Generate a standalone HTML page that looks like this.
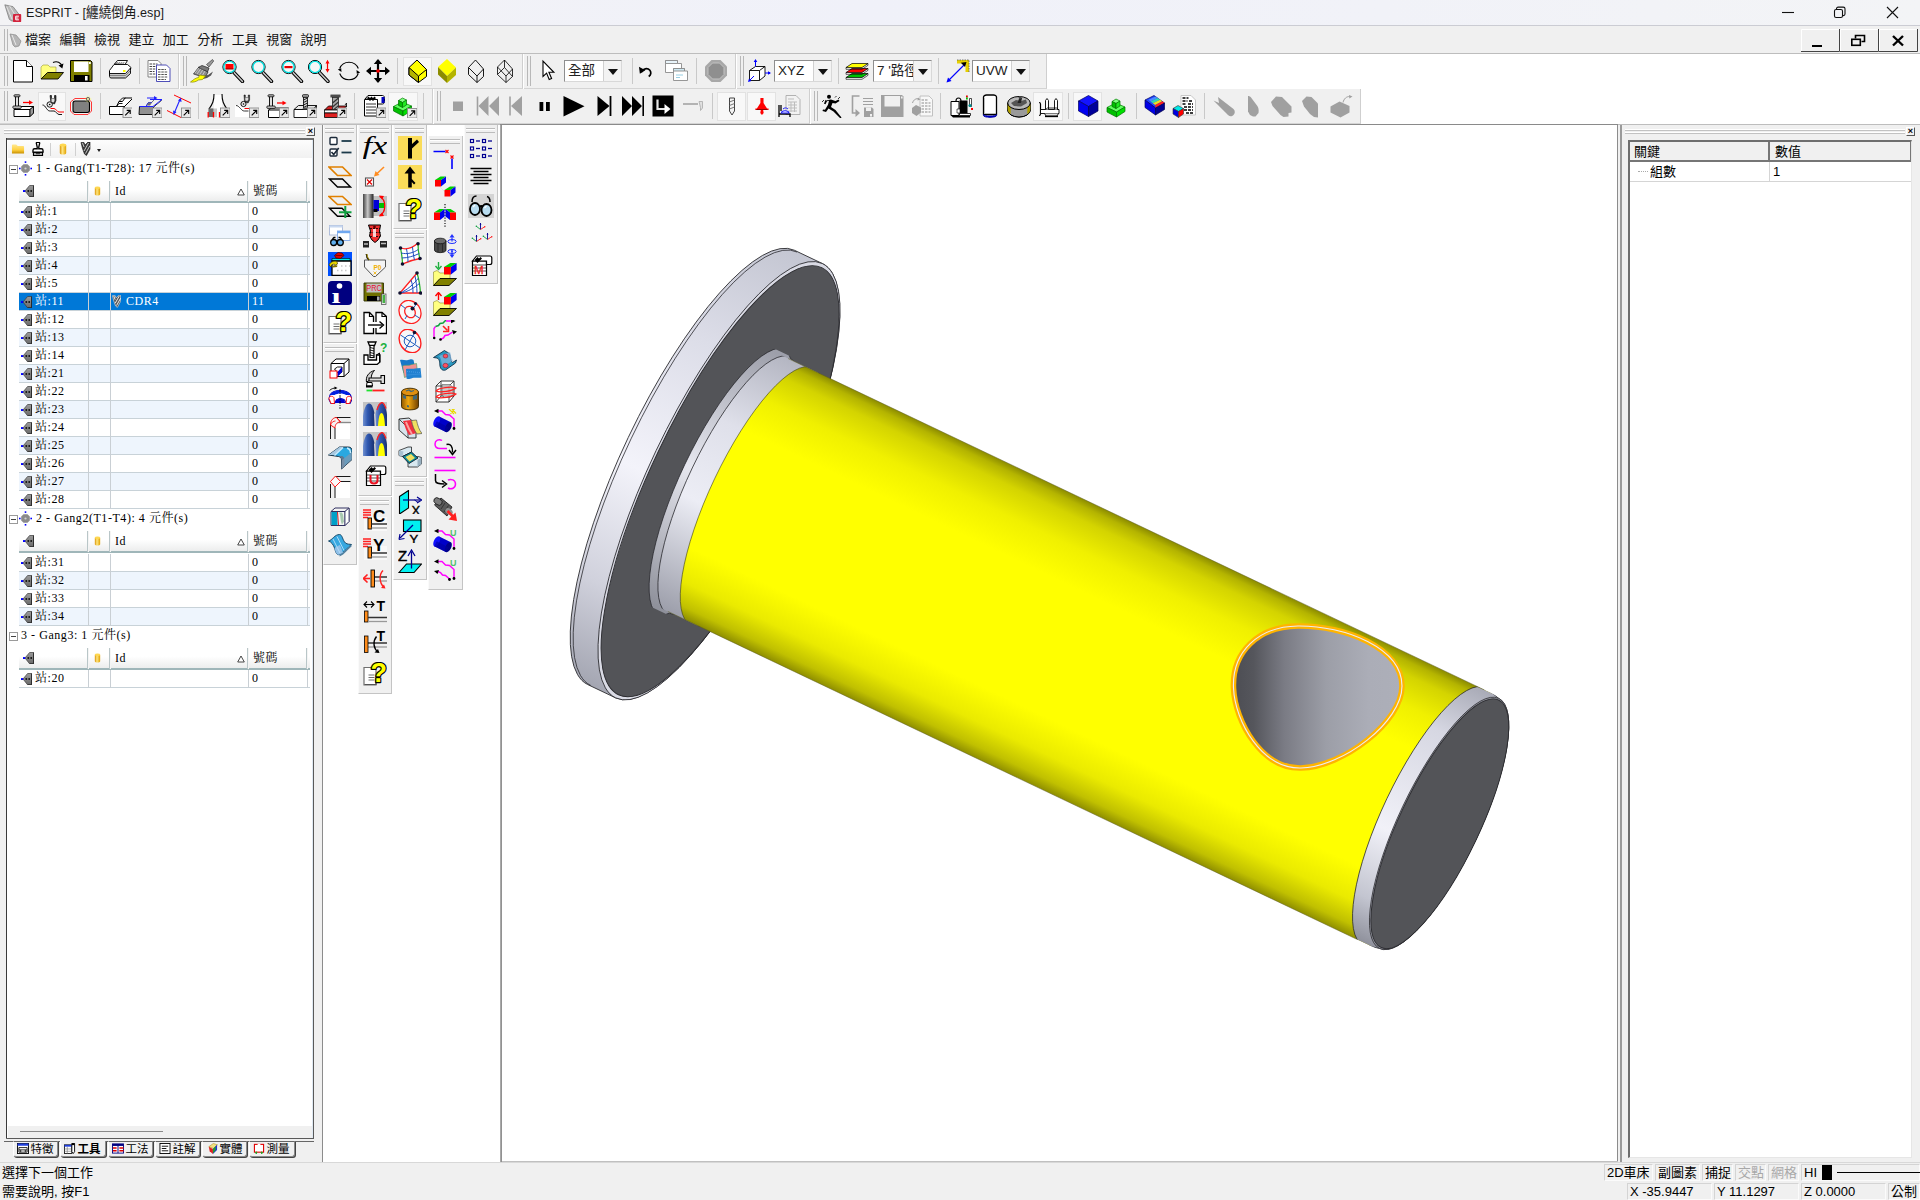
<!DOCTYPE html><html lang="zh-Hant"><head><meta charset="utf-8"><title>ESPRIT</title><style>
*{box-sizing:border-box;margin:0;padding:0}
html,body{width:1920px;height:1200px;overflow:hidden;background:#f0f0f0;font-family:"Liberation Sans","Noto Sans CJK TC",sans-serif;font-size:13px;color:#000}
.abs{position:absolute}
#title{position:absolute;left:0;top:0;width:1920px;height:25px;background:linear-gradient(90deg,#f3f3f5 0%,#f0f1f9 45%,#f1f2f8 72%,#f3f4f6 100%)}
#title .t{position:absolute;left:26px;top:5px;font-size:13.500px;line-height:16px;white-space:nowrap;transform-origin:0 50%;color:#1a1a1a}
#menubar{position:absolute;left:0;top:25px;width:1920px;height:29px;background:#f0f0f0;border-top:1px solid #cbccd3;border-bottom:1px solid #bdbdbd}
.mi{position:absolute;top:6px;font-size:13px;line-height:16px;white-space:nowrap;color:#111}
.tbrow{position:absolute;left:0;width:1920px;background:#fff}
.tb{position:absolute;top:0;height:100%;background:#f0f0f0;border-right:1px solid #cfcfcf;border-bottom:1px solid #d4d4d4}
.grip{position:absolute;top:2px;bottom:2px;width:4px;border-left:1px solid #b8b8b8;border-right:1px solid #b8b8b8}
.sep{position:absolute;top:4px;bottom:4px;width:1px;background:#c9c9c9}
.ic{position:absolute}
.pressed{position:absolute;background:#f8f8f8;border:1px solid #e2e2e2}
.combo{position:absolute;height:22px;background:#fff;border:1px solid #8e8e8e;border-right-color:#d8d8d8;border-bottom-color:#d8d8d8;font-size:13.500px;line-height:20px;padding-left:3px;color:#222;white-space:nowrap;overflow:hidden}
.combo i{position:absolute;right:0;top:0;width:18px;height:20px;background:#f3f3f3;border-left:1px solid #d0d0d0}
.combo i:after{content:"";position:absolute;left:4px;top:8px;border:5px solid transparent;border-top:6px solid #111;border-bottom:0}
#main{position:absolute;left:0;top:124px;width:1920px;height:1038px;background:#f0f0f0;border-top:1px solid #bdbdbd}
.hgrip{position:absolute;height:5px;background:linear-gradient(#fff 0,#fff 1px,#c2c2c2 1px,#c2c2c2 2px,#f0f0f0 2px,#f0f0f0 3px,#fff 3px,#fff 4px,#c2c2c2 4px,#c2c2c2 5px)}
.xbtn{position:absolute;width:9px;height:9px;background:#f0f0f0;border:1px solid #fff;border-right-color:#555;border-bottom-color:#555;font-size:9px;line-height:7px;font-weight:bold;text-align:center}
.vtb{position:absolute;background:#f0f0f0;border-right:1px solid #c4c4c4;border-bottom:1px solid #c4c4c4;border-left:1px solid #fafafa}
.vgrip{position:absolute;left:1px;right:2px;height:5px;border-top:1px solid #bcbcbc;border-bottom:1px solid #bcbcbc;background:linear-gradient(#fff,#fff 1px,#f0f0f0 1px,#f0f0f0 2px,#f0f0f0 3px)}
#status{position:absolute;left:0;top:1162px;width:1920px;height:38px;background:#f0f0f0;border-top:1px solid #d8d8d8}
.sb{position:absolute;font-size:13px;line-height:16px;white-space:nowrap;border:1px solid #d4d4d4;border-right-color:#fbfbfb;border-bottom-color:#fbfbfb;padding-left:2px;height:17px}
.tree{font-family:"Liberation Serif","Noto Serif CJK SC",serif;font-size:12px;letter-spacing:.55px}
.trow{position:absolute;left:19px;width:291px;height:18px;border-bottom:1px solid #c8d2d8;background:#fff}
.trow.alt{background:#eef5fd}
.trow.sel{background:#0078d7;color:#fff}
.trow span{position:absolute;top:0;line-height:17px;white-space:nowrap}
.trow b{position:absolute;top:0;width:1px;height:18px;background:#c9cfd4}
.thead{position:absolute;left:19px;width:291px;height:23px;background:linear-gradient(#fff,#fff 45%,#eceded 100%);border-bottom:2px solid #9fb6b9}
.thead span{position:absolute;top:2px;line-height:18px}
.thead b{position:absolute;top:1px;width:2px;height:21px;background:#b9c6c8;border-right:1px solid #f4f4f4}
.gtitle{position:absolute;left:0;width:304px;height:22px;line-height:20px;white-space:nowrap}
.tab{position:absolute;top:1141px;height:16px;background:#f0f0f0;border:1px solid #8a8a8a;border-top:0;border-left-color:#fff;border-radius:0 0 3px 3px;font-size:11.500px;line-height:15px;white-space:nowrap;box-shadow:1px 1px 0 #444}
</style></head><body>
<div id="title">
<svg class="ic" style="left:3px;top:3px" width="20" height="20" viewBox="0 0 22 22"><path d="M2 2l9 2 7 9-3 5-5 2-3-2z" fill="#b9b9b9" stroke="#777" stroke-width=".8"/><path d="M4 4l6 14M7 3l8 13" stroke="#e6e6e6" stroke-width="1"/><rect x="11" y="12" width="9" height="9" rx="1" fill="#d2233c"/><path d="M14 14.500h3.500M14 16.500h3M14 18.500h3.500M14 14.500v4" stroke="#fff" stroke-width="1.100" fill="none"/></svg>
<div class="t" style="transform:scaleX(.935)">ESPRIT - [纏繞倒角.esp]</div>
<svg class="abs" style="left:1770px;top:0" width="150" height="25" viewBox="0 0 150 25"><g stroke="#111" stroke-width="1.1" fill="none"><path d="M12 12.5h12"/><rect x="64.5" y="9.500" width="8" height="8" rx="1.6"/><path d="M66.500 9.200v-.5a1.600 1.600 0 0 1 1.600-1.600h5.200a1.700 1.700 0 0 1 1.700 1.700v5.200a1.600 1.600 0 0 1-1.600 1.600h-.5"/><path d="M117 7l11 11M128 7l-11 11"/></g></svg>
</div>
<div id="menubar">
<div class="grip" style="left:4px;top:3px;bottom:2px;width:4px"></div>
<svg class="ic" style="left:9px;top:6px" width="14" height="16" viewBox="0 0 14 16"><path d="M1 2l6 1 5 6-2 5-4 1-2-2z" fill="#b5b5b5" stroke="#8a8a8a" stroke-width=".7"/><path d="M3 3l4 10" stroke="#e8e8e8"/></svg>
<div class="mi" style="left:25.0px">檔案</div>
<div class="mi" style="left:59.5px">編輯</div>
<div class="mi" style="left:93.9px">檢視</div>
<div class="mi" style="left:128.4px">建立</div>
<div class="mi" style="left:162.8px">加工</div>
<div class="mi" style="left:197.2px">分析</div>
<div class="mi" style="left:231.7px">工具</div>
<div class="mi" style="left:266.2px">視窗</div>
<div class="mi" style="left:300.6px">說明</div>
<svg class="abs" style="left:1800px;top:3px" width="120" height="24" viewBox="0 0 120 24"><g fill="#f0f0f0"><rect x="1" y="0" width="38" height="22"/><rect x="40" y="0" width="38" height="22"/><rect x="79" y="0" width="38" height="22"/></g><g stroke="#fff" fill="none"><path d="M1.5 22V.5H39M40.5 22V.5H78M79.500 22V.5H117"/></g><g stroke="#444" fill="none"><path d="M1 22.500H39.500V0M40 22.500H78.500V0M79 22.500H117.500V0"/></g><g stroke="#000" fill="none"><path d="M12 17h10" stroke-width="2"/><path d="M55.500 9.500v-3h9v6h-3" stroke-width="1.6"/><rect x="51.800" y="10.300" width="8.500" height="6" stroke-width="1.600"/><path d="M93 7l10 9.500M103 7l-10 9.500" stroke-width="2.4"/></g></svg>
</div>
<div class="tbrow" style="top:54px;height:35px">
<div class="tb" style="left:0px;width:179px">
<div class="grip" style="left:4px"></div>
<svg class="ic" style="left:11px;top:5px" width="24" height="24" viewBox="0 0 24 24"><path d="M2.500 1.500h13l6 6v15.500h-19z" fill="#fff" stroke="#000" stroke-width="1"/><path d="M15.500 1.500v6h6" fill="#fff" stroke="#000" stroke-width="1"/></svg>
<svg class="ic" style="left:39.5px;top:5px" width="24" height="24" viewBox="0 0 24 24"><path d="M1 8l2-2h5l2 2h6v6h-9l-6 6z" fill="#ffff80" stroke="#9a9a30" stroke-width=".6"/><path d="M1 20h17l5.500-6.500h-16z" fill="#808000" stroke="#000" stroke-width=".9"/><path d="M13 3.500c4-2 8 0 9 4" fill="none" stroke="#000" stroke-width="1.100"/><path d="M23.500 4.500l-1.200 5-3.800-3z" fill="#000"/></svg>
<svg class="ic" style="left:69px;top:5px" width="24" height="24" viewBox="0 0 24 24"><path d="M1.500 1.500h20l1.500 1.500v19.500h-21.500z" fill="#808000" stroke="#000" stroke-width="1"/><rect x="5" y="2.500" width="14.500" height="10.500" fill="#fff"/><rect x="20" y="3" width="1.800" height="2" fill="#fff"/><rect x="5" y="16" width="15.500" height="6.500" fill="#000"/><rect x="16" y="17" width="2.600" height="4.500" fill="#fff"/></svg>
<div class="sep" style="left:100px"></div>
<svg class="ic" style="left:107.5px;top:5px" width="24" height="24" viewBox="0 0 24 24"><path d="M6.500 5l3-3.500h10l-2.500 4z" fill="#fff" stroke="#000" stroke-width=".9"/><path d="M8.500 3.500h8M7.800 4.500h8" stroke="#555" stroke-width=".6" stroke-dasharray="1.500 .7"/><path d="M1.500 11.500l4.500-6h13.500l3.500 3-1 3.500-4 4.500h-16.500z" fill="#fff" stroke="#000" stroke-width=".9"/><path d="M1.500 12v5.500l1 1.500h15l5-4.500v-5.500l-5 5.500h-16z" fill="#c8c8c8" stroke="#000" stroke-width=".9"/><rect x="15" y="11" width="2.500" height="2" fill="#ffff00"/><path d="M2 16.500h15.500l5-5" fill="none" stroke="#666" stroke-width=".7"/></svg>
<div class="sep" style="left:139px"></div>
<svg class="ic" style="left:147px;top:5px" width="24" height="24" viewBox="0 0 24 24"><path d="M1 1.500h10l3 3v13.500h-13z" fill="#fff" stroke="#777" stroke-width=".9"/><path d="M2.500 5h8M2.500 7.500h6M2.500 10h7M2.500 12.500h5M2.500 15h6" stroke="#444" stroke-width="1.100" stroke-dasharray="2.500 .8"/><path d="M9.500 6h10l3.500 3.500v13h-13.500z" fill="#fff" stroke="#3a3ab0" stroke-width=".9"/><path d="M11 10.500h8M11 13h10M11 15.500h9M11 18h10M11 20.500h8" stroke="#555" stroke-width="1.100" stroke-dasharray="2.500 .8"/></svg>
</div>
<div class="tb" style="left:180px;width:343px">
<div class="grip" style="left:3px"></div>
<svg class="ic" style="left:9.5px;top:5px" width="24" height="24" viewBox="0 0 24 24"><path d="M16.500 5.500l6-5 1.200 1.500-4.700 6z" fill="#9a9a9a" stroke="#444" stroke-width=".7"/><path d="M8 8.500l4-2 7 2.500-1.500 4z" fill="#7a7a7a" stroke="#222" stroke-width=".7"/><path d="M3.500 15l5-6.500 9.500 4.500-2 4-3 1z" fill="#8c8c8c" stroke="#222" stroke-width=".7"/><path d="M5 14l4-5M7 15l4-5.500M9.500 16l3.500-5.500M12 17l3-5" stroke="#ddd" stroke-width=".7"/><path d="M13 17l5-1 5-3.500-2 4-4 2.500-4 1z" fill="#555"/><path d="M.5 23c4-3 5-4 8-4.500l1-2.500 6 1-3 3.500-4 .5c-2 1.500-5 2.500-8 2z" fill="#ffff00" stroke="#8a8a00" stroke-width=".7"/></svg>
<svg class="ic" style="left:41px;top:5px" width="24" height="24" viewBox="0 0 24 24"><path d="M13 13.500l8.500 9" stroke="#000" stroke-width="3.400" stroke-linecap="round"/><path d="M13 13.500l8.300 8.800" stroke="#c8c8c8" stroke-width="1.600" stroke-linecap="round"/><circle cx="8.500" cy="8" r="6.600" fill="#f6f6f6" stroke="#000" stroke-width="1"/><circle cx="8.500" cy="8" r="5.600" fill="none" stroke="#00e0e0" stroke-width="1.300"/><rect x="4.500" y="5" width="8" height="5" fill="#ff0000"/><path d="M4.500 10h8" stroke="#800" stroke-width="1"/></svg>
<svg class="ic" style="left:70px;top:5px" width="24" height="24" viewBox="0 0 24 24"><path d="M13 13.500l8.500 9" stroke="#000" stroke-width="3.400" stroke-linecap="round"/><path d="M13 13.500l8.300 8.800" stroke="#c8c8c8" stroke-width="1.600" stroke-linecap="round"/><circle cx="8.500" cy="8" r="6.600" fill="#f6f6f6" stroke="#000" stroke-width="1"/><circle cx="8.500" cy="8" r="5.600" fill="none" stroke="#00e0e0" stroke-width="1.300"/></svg>
<svg class="ic" style="left:99.5px;top:5px" width="24" height="24" viewBox="0 0 24 24"><path d="M13 13.500l8.500 9" stroke="#000" stroke-width="3.400" stroke-linecap="round"/><path d="M13 13.500l8.300 8.800" stroke="#c8c8c8" stroke-width="1.600" stroke-linecap="round"/><circle cx="8.500" cy="8" r="6.600" fill="#f6f6f6" stroke="#000" stroke-width="1"/><circle cx="8.500" cy="8" r="5.600" fill="none" stroke="#00e0e0" stroke-width="1.300"/><rect x="4.500" y="7" width="8" height="2.200" fill="#e00000"/></svg>
<svg class="ic" style="left:127.5px;top:5px" width="24" height="24" viewBox="0 0 24 24"><g transform="translate(-1.500 0)"><path d="M13 13.500l8.500 9" stroke="#000" stroke-width="3.400" stroke-linecap="round"/><path d="M13 13.500l8.300 8.800" stroke="#c8c8c8" stroke-width="1.600" stroke-linecap="round"/><circle cx="8.500" cy="8" r="6.600" fill="#f6f6f6" stroke="#000" stroke-width="1"/><circle cx="8.500" cy="8" r="5.600" fill="none" stroke="#00e0e0" stroke-width="1.300"/></g><path d="M19.500 3v8.500" stroke="#ff0000" stroke-width="1.200"/><path d="M19.500 .8l2 3.700h-4zM19.500 13.700l2-3.700h-4z" fill="#ff0000"/></svg>
<svg class="ic" style="left:157px;top:5px" width="24" height="24" viewBox="0 0 24 24"><path d="M2.700 9.500a10 10 0 0 1 18.600 0M21.300 14.500a10 10 0 0 1-18.600 0" fill="none" stroke="#000" stroke-width="1.100"/><path d="M.8 10.500l3.400-1.200.3 3.600zM23.200 13.500l-3.400 1.200-.3-3.600z" fill="#000" transform="translate(0 0)"/></svg>
<svg class="ic" style="left:185.5px;top:5px" width="24" height="24" viewBox="0 0 24 24"><path d="M12 1v22M1 12h22" stroke="#000" stroke-width="2.200"/><path d="M12 0l4.200 5h-8.400zM12 24l4.200-5h-8.400zM0 12l5-4.200v8.400zM24 12l-5-4.200v8.400z" fill="#000"/><circle cx="12" cy="12" r="1.800" fill="#ff0000"/></svg>
<div class="sep" style="left:217px"></div>
<div class="pressed" style="left:223px;top:3px;width:29px;height:29px"></div>
<svg class="ic" style="left:226px;top:5px" width="24" height="24" viewBox="0 0 24 24"><path d="M3 8.500l8-7.500 9.500 9.500v7l-8 6-9.500-7.500z" fill="#ffff00" stroke="#000" stroke-width="1"/><path d="M3 8.500l9.500 8.500v6.500l-9.500-7.500z" fill="#b4b400" stroke="#000" stroke-width="1"/><path d="M12.500 17l8-6.500" stroke="#000" stroke-width="1"/></svg>
<svg class="ic" style="left:255px;top:5px" width="24" height="24" viewBox="0 0 24 24"><path d="M3 8l9-8 9 8.500-9 8.500z" fill="#ffff00"/><path d="M3 8l9 9v7l-9-8.500z" fill="#8c8c00"/><path d="M12 17l9-8.500v7.500l-9 8z" fill="#b4b400"/></svg>
<svg class="ic" style="left:283.5px;top:5px" width="24" height="24" viewBox="0 0 24 24"><path d="M4.500 8.500l7-7.500 8 9v7.500l-6.500 6-8.500-8z" fill="none" stroke="#000" stroke-width=".9"/><path d="M4.500 8.500l8.500 8.500v6.500M13 17l6.500-7" fill="none" stroke="#000" stroke-width=".9"/></svg>
<svg class="ic" style="left:313px;top:5px" width="24" height="24" viewBox="0 0 24 24"><path d="M4.500 8l7-7 8 9v7.500l-6.500 6-8.500-8z" fill="none" stroke="#000" stroke-width=".8"/><path d="M4.500 8l8.500 9v6.500M13 17l6.500-7M11.500 1v7.500l-7 7M11.500 8.500l8 9" fill="none" stroke="#000" stroke-width=".8"/></svg>
</div>
<div class="tb" style="left:524px;width:212px">
<div class="grip" style="left:3px"></div>
<svg class="ic" style="left:12px;top:5px" width="24" height="24" viewBox="0 0 24 24"><path d="M7 2v15.500l3.600-3.400 2.600 6.400 2.400-1-2.700-6.200h5z" fill="#fff" stroke="#000" stroke-width="1.100" stroke-linejoin="miter"/></svg>
<div class="combo" style="left:40px;top:6px;width:58px">全部<i></i></div>
<div class="sep" style="left:108px"></div>
<svg class="ic" style="left:110px;top:5px" width="24" height="24" viewBox="0 0 24 24"><g transform="translate(3 3.500) scale(.78)"><path d="M5.500 12.500c2-5 8-6 11-2.500 2 2.500 1.500 6-1.500 8" fill="none" stroke="#000" stroke-width="2.200"/><path d="M2.500 5.500l1.200 9 7-4.500z" fill="#000"/></g></svg>
<svg class="ic" style="left:140px;top:5px" width="24" height="24" viewBox="0 0 24 24"><path d="M1.500 1.500h12v3h4v9h-16z" fill="#fff" stroke="#8a8a8a" stroke-width=".9"/><path d="M1.500 1.500h12v3h-12z" fill="#e8f4fa" stroke="#8a8a8a" stroke-width=".9"/><path d="M9.500 9.500h11v2.500h3v9.500h-14z" fill="#fff" stroke="#8a8a8a" stroke-width=".9"/><path d="M9.500 9.500h11v2.500h-11z" fill="#cfe9f3" stroke="#8a8a8a" stroke-width=".9"/><path d="M12 16h7M12 18.500h4" stroke="#9ad0e4" stroke-width="1"/></svg>
<div class="sep" style="left:172px"></div>
<svg class="ic" style="left:179.5px;top:5px" width="24" height="24" viewBox="0 0 24 24"><path d="M7.500 1h9l6.500 6.500v9l-6.500 6.500h-9l-6.500-6.500v-9z" fill="#a8a8a8"/><path d="M8.500 4h7l4.500 4.500v7l-4.500 4.500h-7l-4.500-4.500v-7z" fill="#8f8f8f" stroke="#c2c2c2" stroke-width="1"/></svg>
</div>
<div class="tb" style="left:737px;width:310px">
<div class="grip" style="left:3px"></div>
<svg class="ic" style="left:9.5px;top:5px" width="24" height="24" viewBox="0 0 24 24"><path d="M2.500 11.500l6-4h9.500v9.500l-5.500 4.500h-10z" fill="#fff" stroke="#000" stroke-width=".9"/><path d="M2.500 11.500h10v10M12.500 11.500l5.500-4" fill="none" stroke="#000" stroke-width=".9"/><path d="M8.500 7.500v-6M18 14h5M7 17l-5 5" stroke="#0000ff" stroke-width="1"/><path d="M8.500 0l1.800 3h-3.600zM24 14l-3 1.800v-3.600zM1 23l1-3.400 2.400 2.400z" fill="#0000ff"/></svg>
<div class="combo" style="left:37px;top:6px;width:58px">XYZ<i></i></div>
<div class="sep" style="left:101px"></div>
<svg class="ic" style="left:108px;top:5px" width="24" height="24" viewBox="0 0 24 24"><path d="M1 18.500l6-4h16l-6 4z" fill="#00c000" stroke="#000" stroke-width=".7"/><path d="M1 13.500l6-4h16l-6 4z" fill="#ff0000" stroke="#000" stroke-width=".7"/><path d="M1 8.500l6-4h16l-6 4z" fill="#ffff00" stroke="#000" stroke-width=".7"/><path d="M1 8.500v1.800h16l6-4v-1.800M1 13.500v1.800h16l6-4v-1.800M1 18.500v1.800h16l6-4v-1.800" fill="none" stroke="#000" stroke-width=".6"/></svg>
<div class="combo" style="left:136px;top:6px;width:59px">7 '路徑<i></i></div>
<div class="sep" style="left:201px"></div>
<svg class="ic" style="left:209px;top:5px" width="24" height="24" viewBox="0 0 24 24"><path d="M11 1h12v12h-3.500v-8.500h-8.500z" fill="#e6d000"/><path d="M11 1h12v12" fill="none" stroke="#555" stroke-width=".8" stroke-dasharray="1.500 1"/><path d="M3 21l16-16" stroke="#0000ff" stroke-width="1.100"/><path d="M.5 23.500l1.500-5 3.500 3.500z" fill="#0000ff"/><path d="M20.500 3l-1.500 5-4.200-4.200z" fill="#000"/></svg>
<div class="combo" style="left:235px;top:6px;width:58px">UVW<i></i></div>
</div>
</div>
<div class="tbrow" style="top:89px;height:35px">
<div class="tb" style="left:0px;width:433px">
<div class="grip" style="left:4px"></div>
<svg class="ic" style="left:11px;top:5px" width="24" height="24" viewBox="0 0 24 24"><path d="M3 15.500l3.500-3h16v6.500l-3.500 3.500h-16z" fill="#fff" stroke="#000" stroke-width="1"/><path d="M3 15.500h16v7M19 15.500l3.500-3" fill="none" stroke="#000" stroke-width="1"/><path d="M19 15.500l3.500-3v6.500l-3.500 3.500z" fill="#9a9a9a" stroke="#000" stroke-width=".8"/><rect x="4.5" y="1.500" width="3" height="11.500" fill="#e0e0e0" stroke="#000" stroke-width=".9"/><rect x="3" y=".8" width="6" height="2" rx=".8" fill="#c0c0c0" stroke="#000" stroke-width=".8"/><rect x="1.8" y="12" width="8.500" height="2.400" rx="1" fill="#c8c8c8" stroke="#000" stroke-width=".8"/><path d="M12 8.500h7" stroke="#ff0000" stroke-width="1.300"/><path d="M22 8.500l-4-2.200v4.400z" fill="#ff0000"/></svg>
<div class="pressed" style="left:38px;top:3px;width:28px;height:29px"></div>
<svg class="ic" style="left:40.5px;top:5px" width="24" height="24" viewBox="0 0 24 24"><path d="M9 1.500h1.500v3h3v-3h1.500v5l-1.500 3.500-3.500-1z" fill="#333" stroke="#000" stroke-width=".6"/><path d="M10.500 4.500h3v2.500l-1 1.500-2-.5z" fill="#ddd"/><circle cx="8.700" cy="10.500" r="2.700" fill="#e8e8e8" stroke="#000" stroke-width=".9"/><circle cx="8.700" cy="10.500" r=".8" fill="#000"/><path d="M1.500 11c2 0 2.500 1.500 4 3.500s2 2.500 4 2.500h3.500c2 0 3 3.500 5 3.500h3" fill="none" stroke="#000" stroke-width=".9"/><path d="M9.500 14.500h3.500c2 0 3 3.500 5 3.500h5" fill="none" stroke="#ff0000" stroke-width="1"/></svg>
<svg class="ic" style="left:69px;top:5px" width="24" height="24" viewBox="0 0 24 24"><path d="M6 4.500h13l3.500 3.500v9l-3.500 3.500h-14l-3.500-3.500v-9z" fill="#f4f4f4" stroke="#ff2020" stroke-width=".9"/><rect x="4" y="7" width="16.500" height="11.500" rx="2.200" fill="#808080" stroke="#000" stroke-width="1.100"/><circle cx="19" cy="5" r="1.700" fill="#d8d8a0" stroke="#444" stroke-width=".7"/><circle cx="19" cy="5" r="2.800" fill="none" stroke="#ffff60" stroke-width=".6" stroke-dasharray="1 1"/></svg>
<div class="sep" style="left:100px"></div>
<svg class="ic" style="left:108px;top:5px" width="24" height="24" viewBox="0 0 24 24"><path d="M1.500 12.500h7l2.500-5h3.500l2.500-3.500h8l-9 9v7.500h-14.500z" fill="#fff" stroke="#000" stroke-width="1"/><path d="M8.500 12.500l2.500-3h3.500M1.500 12.500h14.500M11 7.500l3.500-3.500h3" fill="none" stroke="#000" stroke-width=".9"/><rect x="15" y="14" width="9.5" height="9.500" fill="#e8e8e8" stroke="#8a8a8a" stroke-width=".9"/><path d="M17.2 21.4l5-5m-3.500 0h3.500v3.500" fill="none" stroke="#000" stroke-width="1.1"/></svg>
<svg class="ic" style="left:137.5px;top:5px" width="24" height="24" viewBox="0 0 24 24"><path d="M1.500 12.500h6.500l2.500-4h3.500l2.500-3h8l-9 7.500v7.500h-14.500z" fill="#909090" stroke="#000" stroke-width=".9"/><path d="M8 12.500l2.500-4h3.500l2.500-3h8l-9 7z" fill="#f0f0f0"/><path d="M1.500 12.500h13.500l9.500-7.500M8 12.500l2.500-4h3.500M12 5.500h12M9 4h9" fill="none" stroke="#2020ff" stroke-width="1"/><path d="M19.500 4l-3.500-2v4z" fill="#2020ff"/><path d="M10.500 8.500h3.500l-2 3h-3z" fill="#707070"/><rect x="14.5" y="14" width="9.5" height="9.500" fill="#e8e8e8" stroke="#8a8a8a" stroke-width=".9"/><path d="M16.7 21.4l5-5m-3.500 0h3.500v3.500" fill="none" stroke="#000" stroke-width="1.1"/></svg>
<svg class="ic" style="left:166.5px;top:5px" width="24" height="24" viewBox="0 0 24 24"><path d="M7 1l17 8M0 16.500l15 7.500" stroke="#ff0000" stroke-width="1"/><path d="M13 5.500l-5.500 13" stroke="#2020ff" stroke-width="1.100"/><path d="M14 3.500l.5 4.500-3.500-1.500zM6.500 21l-.5-4.500 3.500 1.500z" fill="#2020ff"/><rect x="14.5" y="14" width="9.5" height="9.500" fill="#e8e8e8" stroke="#8a8a8a" stroke-width=".9"/><path d="M16.7 21.4l5-5m-3.500 0h3.500v3.500" fill="none" stroke="#000" stroke-width="1.1"/></svg>
<div class="sep" style="left:198px"></div>
<svg class="ic" style="left:205.5px;top:5px" width="24" height="24" viewBox="0 0 24 24"><rect x="8" y="1" width="8" height="22" fill="#fff"/><path d="M8 0c0 7-1.500 10-5 15M16 0c0 7 1.500 10 5 15" fill="none" stroke="#000" stroke-width="1.100"/><rect x="2.500" y="14.500" width="5" height="8.500" fill="#555"/><path d="M4 14.500v8.500M6 14.500v8.500" stroke="#999" stroke-width=".7"/><rect x="8" y="14.500" width="3" height="8.500" fill="#c8c8c8"/><path d="M2.200 18v5.500M7.500 18v5.500M13.500 18v5.500" stroke="#ff0000" stroke-width="1.300"/><rect x="14.5" y="14" width="9.5" height="9.500" fill="#e8e8e8" stroke="#8a8a8a" stroke-width=".9"/><path d="M16.7 21.4l5-5m-3.500 0h3.500v3.500" fill="none" stroke="#000" stroke-width="1.1"/></svg>
<svg class="ic" style="left:234.5px;top:5px" width="24" height="24" viewBox="0 0 24 24"><path d="M0 11h7l4 4h9v8h-20z" fill="#fff"/><path d="M9 1h1.300v2.500h3v-2.500h1.300v5l-1.500 3-3.500-1z" fill="#444" stroke="#000" stroke-width=".5"/><path d="M10.300 3.500h3v2l-1 1.500-2-.5z" fill="#ddd"/><circle cx="8.500" cy="10" r="2.600" fill="#eee" stroke="#000" stroke-width=".9"/><circle cx="8.500" cy="10" r=".8" fill="#000"/><path d="M1 11.500c2 0 3 1.500 4.500 3s2 2.500 4 2.500h4" fill="none" stroke="#000" stroke-width=".8"/><path d="M9.500 14.500h6" stroke="#ff0000" stroke-width="1"/><rect x="14.5" y="14" width="9.5" height="9.500" fill="#e8e8e8" stroke="#8a8a8a" stroke-width=".9"/><path d="M16.7 21.4l5-5m-3.500 0h3.500v3.500" fill="none" stroke="#000" stroke-width="1.1"/></svg>
<svg class="ic" style="left:264.5px;top:5px" width="24" height="24" viewBox="0 0 24 24"><path d="M3.500 16h20v7.500h-20z" fill="#fff" stroke="#000" stroke-width="1"/><path d="M3.500 16l3-2h17" fill="none" stroke="#000" stroke-width=".9"/><rect x="4.5" y="1.500" width="3" height="11.500" fill="#e0e0e0" stroke="#000" stroke-width=".9"/><rect x="3" y=".8" width="6" height="2" rx=".8" fill="#c0c0c0" stroke="#000" stroke-width=".8"/><rect x="1.8" y="12" width="8.500" height="2.400" rx="1" fill="#c8c8c8" stroke="#000" stroke-width=".8"/><path d="M12 9h6.500" stroke="#ff0000" stroke-width="1.300"/><path d="M21.500 9l-4-2.200v4.400z" fill="#ff0000"/><rect x="14.5" y="14" width="9.5" height="9.500" fill="#e8e8e8" stroke="#8a8a8a" stroke-width=".9"/><path d="M16.7 21.4l5-5m-3.500 0h3.500v3.500" fill="none" stroke="#000" stroke-width="1.1"/></svg>
<svg class="ic" style="left:293px;top:5px" width="24" height="24" viewBox="0 0 24 24"><path d="M1 15.500l4.500-4h18l-3 4z" fill="#e8e8e8" stroke="#000" stroke-width=".9"/><path d="M1 15.500h19.500v8h-19.500z" fill="#fff" stroke="#000" stroke-width=".9"/><path d="M20.500 15.500l3-4v8l-3 4z" fill="#bbb" stroke="#000" stroke-width=".8"/><rect x="9.500" y=".7" width="6" height="2.600" rx=".8" fill="#aaa" stroke="#000" stroke-width=".8"/><rect x="10.500" y="3.300" width="4" height="11" fill="#ccc" stroke="#000" stroke-width=".8"/><path d="M10.500 6l4-2M10.500 8.500l4-2M10.500 11l4-2M10.500 13.500l4-2" stroke="#000" stroke-width=".8"/><ellipse cx="12.500" cy="14.500" rx="3" ry="1.100" fill="#555"/><rect x="14.5" y="14" width="9.5" height="9.500" fill="#e8e8e8" stroke="#8a8a8a" stroke-width=".9"/><path d="M16.7 21.4l5-5m-3.500 0h3.500v3.500" fill="none" stroke="#000" stroke-width="1.1"/></svg>
<svg class="ic" style="left:323px;top:5px" width="24" height="24" viewBox="0 0 24 24"><path d="M1.500 16l4-4h18l-3.500 4z" fill="#d02020" stroke="#000" stroke-width=".8"/><path d="M1.500 16h18.500v3h-18.500z" fill="#fff" stroke="#000" stroke-width=".8"/><path d="M1.500 19h18.500v4.500h-18.500z" fill="#e02020" stroke="#000" stroke-width=".8"/><rect x="7.500" y=".6" width="10" height="2.800" fill="#333"/><path d="M8 1v2.500M10 1v2.500M12 1v2.500M14 1v2.500M16 1v2.500" stroke="#888" stroke-width=".6"/><rect x="9.500" y="3.400" width="6" height="12" fill="#aaa" stroke="#222" stroke-width=".8"/><path d="M9.500 9l6-5M9.500 13l6-5M11 15.400l4.500-3.800" stroke="#333" stroke-width="1.200"/><path d="M22 11l1.500-2v4" stroke="#000" stroke-width=".8" fill="none"/><rect x="14.5" y="14" width="9.5" height="9.500" fill="#e8e8e8" stroke="#8a8a8a" stroke-width=".9"/><path d="M16.7 21.4l5-5m-3.500 0h3.500v3.500" fill="none" stroke="#000" stroke-width="1.1"/></svg>
<div class="sep" style="left:354px"></div>
<svg class="ic" style="left:362px;top:5px" width="24" height="24" viewBox="0 0 24 24"><path d="M2.500 5.500h13v16.500h-13z" fill="#fff" stroke="#000" stroke-width="1"/><path d="M4 10h10M4 13h10M4 16h10M4 19h10" stroke="#000" stroke-width=".8"/><path d="M3 5l3-3.500h14.500c1.500 0 2 1.500 2 3v3c0 1.500-1 2.500-2 2.500h-5v-4.500z" fill="#fff" stroke="#000" stroke-width="1"/><rect x="19.500" y="3" width="3" height="6" fill="#0000c0"/><path d="M5 4l1.500-1.500 1.500 1.500-1.500 1.500zM8 4l1.500-1.500 1.500 1.500-1.500 1.500zM6.500 5.500l1.500-1.500 1.500 1.500-1.500 1.500zM9.500 5.500l1.500-1.500 1.500 1.500-1.500 1.500zM11 4l1.500-1.500 1.500 1.500-1.500 1.500z" fill="#000"/><rect x="14.5" y="14" width="9.5" height="9.500" fill="#e8e8e8" stroke="#8a8a8a" stroke-width=".9"/><path d="M16.7 21.4l5-5m-3.500 0h3.500v3.500" fill="none" stroke="#000" stroke-width="1.1"/></svg>
<div class="pressed" style="left:388px;top:3px;width:30px;height:29px"></div>
<svg class="ic" style="left:393px;top:5px" width="24" height="24" viewBox="0 0 24 24"><g transform="translate(0 -1)"><path d="M.5 13.500l8.500-4.500 9.500 4-8.500 5z" fill="#60ff60" stroke="#008000" stroke-width=".7"/><path d="M.5 13.500l9.500 4.500v5l-9.500-5z" fill="#00c000" stroke="#007000" stroke-width=".7"/><path d="M10 18l8.500-5v4.500l-8.500 5.500z" fill="#00e000" stroke="#007000" stroke-width=".7"/><path d="M5.500 7.500l4-2.500 4 2-4 2.500z" fill="#80ff80" stroke="#008000" stroke-width=".7"/><path d="M5.500 7.500l4 2v5l-4-2z" fill="#00c000" stroke="#007000" stroke-width=".7"/><path d="M9.500 9.500l4-2.500v5l-4 2.500z" fill="#20e820" stroke="#007000" stroke-width=".7"/></g><rect x="14.5" y="14.5" width="9.5" height="9.500" fill="#e8e8e8" stroke="#8a8a8a" stroke-width=".9"/><path d="M16.7 21.9l5-5m-3.500 0h3.500v3.500" fill="none" stroke="#000" stroke-width="1.1"/></svg>
<div class="sep" style="left:423px"></div>
</div>
<div class="tb" style="left:434px;width:376px">
<div class="grip" style="left:3px"></div>
<svg class="ic" style="left:12px;top:5px" width="24" height="24" viewBox="0 0 24 24"><rect x="7" y="7.500" width="10" height="9.500" fill="#a0a0a0"/></svg>
<svg class="ic" style="left:41.5px;top:5px" width="24" height="24" viewBox="0 0 24 24"><path d="M1.500 2.500v19" stroke="#a0a0a0" stroke-width="1.600"/><path d="M2.500 12l10-10v20zM13 12l10-10v20z" fill="#a0a0a0"/></svg>
<svg class="ic" style="left:70px;top:5px" width="24" height="24" viewBox="0 0 24 24"><path d="M6 2.500v19" stroke="#a0a0a0" stroke-width="1.600"/><path d="M7 12l11-10v20z" fill="#a0a0a0"/></svg>
<svg class="ic" style="left:99px;top:5px" width="24" height="24" viewBox="0 0 24 24"><rect x="6.500" y="8" width="3.800" height="9" fill="#000"/><rect x="13" y="8" width="3.800" height="9" fill="#000"/></svg>
<svg class="ic" style="left:128px;top:5px" width="24" height="24" viewBox="0 0 24 24"><path d="M1.500 2v20.500l21-10.250z" fill="#000"/></svg>
<svg class="ic" style="left:159px;top:5px" width="24" height="24" viewBox="0 0 24 24"><path d="M4.500 2v20l12-10z" fill="#000"/><path d="M17.500 2v20" stroke="#000" stroke-width="1.800"/></svg>
<svg class="ic" style="left:186.5px;top:5px" width="24" height="24" viewBox="0 0 24 24"><path d="M1 2v20l10-10zM11 2v20l10-10z" fill="#000"/><path d="M22.200 2v20" stroke="#000" stroke-width="1.600"/></svg>
<svg class="ic" style="left:216.5px;top:5px" width="24" height="24" viewBox="0 0 24 24"><rect x="1.500" y="1.500" width="21" height="21" fill="#000"/><path d="M6.500 5.500v9.500h8" fill="none" stroke="#e8e8e8" stroke-width="2.200"/><path d="M19.500 15l-6-5v10z" fill="#fff"/></svg>
<svg class="ic" style="left:246.5px;top:5px" width="24" height="24" viewBox="0 0 24 24"><path d="M2 10h15" stroke="#8a8a8a" stroke-width="1.200"/><path d="M18 7.500h3.500v6.500l-2 2.500v-3z" fill="#e0e0e0" stroke="#aaa" stroke-width=".8"/></svg>
<div class="sep" style="left:278px"></div>
<div class="pressed" style="left:283px;top:3px;width:29px;height:29px"></div>
<svg class="ic" style="left:286px;top:5px" width="24" height="24" viewBox="0 0 24 24"><path d="M9.500 4h5v13l-2.500 4-2.500-4z" fill="#f4f4f4" stroke="#444" stroke-width="1"/><path d="M9.500 8l5-2M9.500 11.500l5-2M9.500 15l5-2" stroke="#666" stroke-width=".9"/></svg>
<div class="pressed" style="left:313px;top:3px;width:29px;height:29px"></div>
<svg class="ic" style="left:315.5px;top:5px" width="24" height="24" viewBox="0 0 24 24"><g transform="translate(2.600 0) scale(.78 1)"><path d="M10 4h4v5l4.500 5.500h2v1.500h-17v-1.500h2l4.500-5.500z" fill="#ff0000"/><path d="M5 15.500h14" stroke="#800000" stroke-width="1"/><path d="M10.500 16h3l.7 3-2.200 2-2.200-2z" fill="#ff0000"/></g></svg>
<svg class="ic" style="left:344px;top:5px" width="24" height="24" viewBox="0 0 24 24"><path d="M8 1.500h10l4 4v15h-14z" fill="#f2f2f2" stroke="#aaa" stroke-width=".9"/><path d="M10 5h6M10 8h9M10 11h9M10 14h9M10 17h9M13 8v10M16.500 8v10" stroke="#bdbdbd" stroke-width="1"/><path d="M1 11v12M1 20h11v3M3 11v6" fill="none" stroke="#000" stroke-width="1.300"/><path d="M3.500 19c0-3 7-3 7.500 0z" fill="#fff" stroke="#2020ff" stroke-width="1.100"/><path d="M5 15c1.500-1.500 3.500-1.500 5 0" fill="none" stroke="#2020ff" stroke-width="1"/></svg>
</div>
<div class="tb" style="left:811px;width:550px">
<div class="grip" style="left:3px"></div>
<svg class="ic" style="left:10px;top:5px" width="24" height="24" viewBox="0 0 24 24"><circle cx="8" cy="2.800" r="2" fill="#000"/><path d="M5 6.500l5-1 4.500 1.500 3-1.500 1 1.500-4 2.500-3-.5-1.500 4 4.500 3 6 7.500-1 1-7-7-5-3-2.500 3.500-3.500-1 .5-1.500 2 .2 3-5 1-4-2 .5-1.500 3-1.500-.5 1.500-4z" fill="#000"/><path d="M3 6l-2 2M17 5l2-2M14 3.500l1.500-1.500" stroke="#000" stroke-width=".8"/></svg>
<svg class="ic" style="left:39px;top:5px" width="24" height="24" viewBox="0 0 24 24"><path d="M9.500 2h-7v17h4" fill="none" stroke="#a0a0a0" stroke-width="1.600"/><path d="M10 19l-4.500-4v8z" fill="#a0a0a0"/><path d="M13 4.500h10M13 7.500h10M13 10.500h10" stroke="#a0a0a0" stroke-width="1"/><path d="M14 13.500h8l1.500 1.500v8h-9.500z" fill="#a0a0a0"/><rect x="16" y="13.500" width="5" height="3.500" fill="#f0f0f0"/><rect x="20" y="20" width="2" height="2.500" fill="#f0f0f0"/></svg>
<svg class="ic" style="left:69px;top:5px" width="24" height="24" viewBox="0 0 24 24"><path d="M1 1h21l1.500 1.500v20.500h-22.500z" fill="#a0a0a0"/><rect x="4.500" y="2" width="15.500" height="10.500" fill="#f0f0f0"/><rect x="21" y="2.500" width="1.600" height="2" fill="#f0f0f0"/></svg>
<svg class="ic" style="left:98px;top:5px" width="24" height="24" viewBox="0 0 24 24"><path d="M11 2h9l3.500 3.500v16.500h-12.500z" fill="#f8f8f8" stroke="#bbb" stroke-width=".9"/><path d="M12.500 6h6M12.500 9h9M12.500 12h9M12.500 15h9M12.500 18h9" stroke="#b0b0b0" stroke-width="1.300" stroke-dasharray="2.500 1"/><path d="M3 14l4-3 5 2.500v5l-4.500 3.500-4.500-3z" fill="#a0a0a0"/><path d="M3.500 9c1-3.500 4-5 6.500-4" fill="none" stroke="#a0a0a0" stroke-width="1"/><path d="M11.500 5.500l-3 1 .5-3z" fill="#a0a0a0"/></svg>
<div class="sep" style="left:129px"></div>
<svg class="ic" style="left:137.5px;top:5px" width="24" height="24" viewBox="0 0 24 24"><path d="M2 7.500h8v14h-8z" fill="#fff" stroke="#000" stroke-width="1"/><path d="M2 21.500h19v2h-17z" fill="#000"/><path d="M7 7c0-4 5-4 5 0" fill="none" stroke="#000" stroke-width="1.100"/><rect x="10.500" y="6.500" width="8" height="13" fill="#000"/><path d="M8 15h3v4h-3z" fill="#fff" stroke="#000" stroke-width=".6"/><path d="M10.500 19.500h11v2h-11z" fill="#fff" stroke="#000" stroke-width=".8"/><rect x="17" y="1.500" width="1.800" height="2" fill="#e00000"/><rect x="17" y="3.500" width="1.800" height="2" fill="#00c000"/><path d="M20.500 4.500h2v8h-2z" fill="#fff" stroke="#000" stroke-width=".7"/><circle cx="21" cy="11.500" r="1.600" fill="#008c8c"/><rect x="22" y="14" width="2" height="2" fill="#ff0000"/></svg>
<svg class="ic" style="left:167px;top:5px" width="24" height="24" viewBox="0 0 24 24"><path d="M5.500 3c0-1 1.500-2 3-2h7c1.500 0 3 1 3 2v17.500h-13z" fill="#fff" stroke="#000" stroke-width="1.300"/><path d="M5.500 20.500c0 2 13 2 13 0v1c0 2.500-13 2.500-13 0z" fill="#0000e0" stroke="#0000a0" stroke-width=".8"/><path d="M6.500 4v16" stroke="#bbb" stroke-width="1"/></svg>
<svg class="ic" style="left:195.5px;top:5px" width="24" height="24" viewBox="0 0 24 24"><ellipse cx="12" cy="16" rx="11.300" ry="7" fill="#8a8a8a" stroke="#000" stroke-width="1"/><path d="M.7 9v7a11.300 7 0 0 0 22.600 0v-7z" fill="#9a9a9a" stroke="#000" stroke-width="1"/><path d="M.7 10v6c.5 2 1.500 3 3 4v-7zM23.300 10v6c-.5 2-1.500 3-3 4v-7z" fill="#b0a000"/><ellipse cx="12" cy="9" rx="11.300" ry="6.500" fill="#b8b8b8" stroke="#000" stroke-width="1"/><path d="M4 9l5-3 5 1 5-1.500 1 3.500-6 3.500-7-.5z" fill="#555"/><path d="M10.500 9l2-5.500 2.500.5-1 5z" fill="#222"/><circle cx="13" cy="3.500" r="1.400" fill="#444"/></svg>
<div class="pressed" style="left:222px;top:3px;width:30px;height:29px"></div>
<svg class="ic" style="left:226px;top:5px" width="24" height="24" viewBox="0 0 24 24"><path d="M2 8.500c1.500 0 1.500.5 1.500 1.500v10c0 1 0 1.500-1.500 1.500" fill="none" stroke="#000" stroke-width="1.200"/><path d="M3.500 15.500h18.500v4h-18.500z" fill="#fff" stroke="#000" stroke-width=".9"/><path d="M8.500 15.500v-9l1.500-2 1.500 2v9M17.500 15.500v-9l1.500-2 1.500 2v9" fill="#fff" stroke="#000" stroke-width=".9"/><path d="M8.500 15.500l2 -1.500h9l2 1.500" fill="none" stroke="#000" stroke-width=".8"/><path d="M7.500 19.500l1.500 2.500h11l1.500-2.500" fill="#ddd" stroke="#000" stroke-width=".9"/><path d="M8 22.500h13" stroke="#000" stroke-width="1.300"/></svg>
<div class="sep" style="left:257px"></div>
<div class="pressed" style="left:262px;top:3px;width:29px;height:29px"></div>
<svg class="ic" style="left:264.5px;top:5px" width="24" height="24" viewBox="0 0 24 24"><path d="M2.500 7l10-5.500 9.500 5.500-9.500 5.500z" fill="#1414ff" stroke="#000060" stroke-width=".7"/><path d="M2.500 7l10 5.500v10l-10-5.500z" fill="#0000f0" stroke="#000060" stroke-width=".7"/><path d="M12.500 12.500l9.500-5.500v10l-9.500 5.500z" fill="#00009a" stroke="#000050" stroke-width=".7"/></svg>
<svg class="ic" style="left:292.5px;top:5px" width="24" height="24" viewBox="0 0 24 24"><g transform="translate(2.500 0)"><path d="M.5 13.500l8.500-4.500 9.500 4-8.500 5z" fill="#60ff60" stroke="#008000" stroke-width=".7"/><path d="M.5 13.500l9.500 4.500v5l-9.500-5z" fill="#00c000" stroke="#007000" stroke-width=".7"/><path d="M10 18l8.500-5v4.500l-8.500 5.500z" fill="#00e000" stroke="#007000" stroke-width=".7"/><path d="M5.500 7.500l4-2.500 4 2-4 2.500z" fill="#80ff80" stroke="#008000" stroke-width=".7"/><path d="M5.500 7.500l4 2v5l-4-2z" fill="#00c000" stroke="#007000" stroke-width=".7"/><path d="M9.500 9.500l4-2.500v5l-4 2.500z" fill="#20e820" stroke="#007000" stroke-width=".7"/></g></svg>
<div class="sep" style="left:325px"></div>
<svg class="ic" style="left:331.5px;top:5px" width="24" height="24" viewBox="0 0 24 24"><path d="M2 6l9-4.500 10.500 7.500-9 5z" fill="#2040ff" stroke="#000060" stroke-width=".7"/><path d="M5.500 5.800l7-3.300 2.300 1.600-7.200 3.500z" fill="#4a8aff"/><path d="M7.600 7.600l7.200-3.500 2.300 1.600-7.200 3.600z" fill="#30d8b0"/><path d="M9.900 9.300l7.200-3.600 2.200 1.600-7.100 3.700z" fill="#e8e020"/><path d="M12.200 11l7.100-3.700 2.200 1.700-9 5z" fill="#ff2020"/><path d="M2 6l10.500 8v7l-10.500-7.500z" fill="#0000e8" stroke="#000060" stroke-width=".7"/><path d="M12.500 14l9-5v6.500l-9 5.500z" fill="#000090" stroke="#000050" stroke-width=".7"/></svg>
<svg class="ic" style="left:361px;top:5px" width="24" height="24" viewBox="0 0 24 24"><path d="M9 1.500h10l4.500 4.500v15h-14.500z" fill="#fff" stroke="#bbb" stroke-width=".8"/><path d="M10.500 4h6M10.500 7h5M17 7h4M10.500 10h4M16 10h5M12 13h9M12 16h9M14 19h7" stroke="#000" stroke-width="1.400" stroke-dasharray="3 1"/><path d="M1 14.500l5-3 5.500 3-5 3z" fill="#00e8e8" stroke="#333" stroke-width=".6"/><path d="M1 14.500l5.500 3v6l-5.500-3.500z" fill="#0000e0" stroke="#333" stroke-width=".6"/><path d="M6.500 17.500l5-3v5.500l-5 3.500z" fill="#ff0000" stroke="#333" stroke-width=".6"/></svg>
<div class="sep" style="left:393px"></div>
<svg class="ic" style="left:401px;top:5px" width="24" height="24" viewBox="0 0 24 24"><path d="M1.500 6.500l5.500 2.500-1-6 15.500 12c2 2 1.500 4.500 0 6s-3.500 2-5.500 0z" fill="#a0a0a0"/></svg>
<svg class="ic" style="left:429.5px;top:5px" width="24" height="24" viewBox="0 0 24 24"><path d="M7 2c1.500 0 2 .5 3 1.500l6 8c1.500 2 2 4 1.500 7.500l-3 3.500h-2.500l-3-1.500-2-3.500z" fill="#a0a0a0"/></svg>
<svg class="ic" style="left:459px;top:5px" width="24" height="24" viewBox="0 0 24 24"><path d="M1 8l5-5.500 6 .5 9.500 9.500v6l-3 .5v3.500l-5 .5-3-2-8-9z" fill="#a0a0a0"/></svg>
<svg class="ic" style="left:487.5px;top:5px" width="24" height="24" viewBox="0 0 24 24"><path d="M3 7l4.500-4.500 5 .5 6.500 6.500v14l-4-.5-4-3-6-7.500z" fill="#a0a0a0"/></svg>
<svg class="ic" style="left:518px;top:5px" width="24" height="24" viewBox="0 0 24 24"><path d="M1.500 12.500l9-5 10 4.500v6.500l-9 5-10-5z" fill="#a0a0a0"/><path d="M14 8.500c1-4 3.500-6 6.500-6" fill="none" stroke="#a0a0a0" stroke-width="1"/><path d="M23.500 2.500l-3.500-1.500.3 3.500z" fill="#a0a0a0"/></svg>
</div>
</div>
<div id="main">
<div class="hgrip" style="left:4px;top:4px;width:301px"></div>
<div class="xbtn" style="left:306px;top:2px">×</div>
<div class="abs tree" id="treebox" style="left:6px;top:13px;width:308px;height:1001px;background:#fff;border:1px solid #5a5a5a;border-top:2px solid #6e6e6e;border-left:2px solid #6e6e6e;overflow:hidden">
<div class="abs" style="left:0;top:0;width:304px;height:18px;background:linear-gradient(#fdfdfd,#f1f1f1)"></div>
<svg class="ic" style="left:3px;top:4px" width="14" height="10" viewBox="0 0 12.5 9.5"><defs><linearGradient id="gtf" x1="0" y1="0" x2="0" y2="1"><stop offset="0" stop-color="#ffe890"/><stop offset=".6" stop-color="#ffd040"/><stop offset="1" stop-color="#c89000"/></linearGradient></defs><path d="M.5 1.500c0-.6.400-1 1-1h3l1.500 1.500h5c.6 0 1 .4 1 1v6h-11.500z" fill="url(#gtf)"/></svg>
<svg class="ic" style="left:24px;top:2px" width="12" height="14" viewBox="0 0 10 12.5"><path d="M3.500 1c0-1 3-1 3 0l-.8 3.500v1.500h2.300c1 0 1.500.5 1.500 1.500v1.500h-9v-1.500c0-1 .5-1.500 1.500-1.500h2.300v-1.500z" fill="#fff" stroke="#000" stroke-width="1.200"/><path d="M1 9.500h8v2.500h-8z" fill="#fff" stroke="#000" stroke-width="1.100"/><path d="M3 10.500h4" stroke="#000" stroke-width=".8"/></svg>
<div class="abs" style="left:42px;top:3px;width:1px;height:13px;background:#d0d0d0"></div>
<svg class="ic" style="left:51px;top:3px" width="8" height="12" viewBox="0 0 7 12"><defs><linearGradient id="gtc" x1="0" x2="1"><stop offset="0" stop-color="#d89000"/><stop offset=".4" stop-color="#ffe680"/><stop offset="1" stop-color="#e0a000"/></linearGradient></defs><path d="M.3 2v8c0 2 6.400 2 6.400 0v-8z" fill="url(#gtc)"/><ellipse cx="3.500" cy="2" rx="3.200" ry="1.500" fill="#ffd850"/></svg>
<div class="abs" style="left:67px;top:3px;width:1px;height:13px;background:#d0d0d0"></div>
<svg class="ic" style="left:72px;top:2px" width="11" height="14" viewBox="0 0 10 14"><path d="M.5 .5h3l1 2.500 3-3h2v7l-3.500 6.500-2-1.500-2-5.500z" fill="#3a3a3a" stroke="#111" stroke-width=".6"/><path d="M2 1l1.500 4M8 1l-4.500 8M9.500 3.500l-4.500 8" stroke="#d8d8d8" stroke-width=".9"/></svg>
<div class="abs" style="left:89px;top:9px;border:2px solid transparent;border-top:3px solid #222;border-bottom:0"></div>
<div class="gtitle" style="top:18px">
<svg class="abs" style="left:1px;top:7px" width="9" height="9" viewBox="0 0 9 9"><rect x=".5" y=".5" width="8" height="8" fill="#fff" stroke="#9a9a9a"/><path d="M2 4.500h5" stroke="#444"/></svg>
<svg class="ic" style="left:11px;top:3px" width="13" height="15" viewBox="0 0 13 15"><path d="M4.500 3.200h4l2.300 2.300v4l-2.300 2.300h-4l-2.300-2.300v-4z" fill="#8a8a8a"/><circle cx="6.500" cy="7.500" r="1.100" fill="#d0d0d0"/><rect x="5.700" y="0.300" width="1.600" height="1.600" fill="#0000ff"/><rect x="5.700" y="13" width="1.600" height="1.600" fill="#0000ff"/><rect x="0" y="6.700" width="1.600" height="1.600" fill="#0000ff"/><rect x="11.400" y="6.700" width="1.600" height="1.600" fill="#0000ff"/></svg>
<span class="abs" style="left:28px;top:0">1 - Gang(T1-T28): 17 元件(s)</span>
</div>
<div class="thead" style="left:11px;top:40px">
<svg class="ic" style="left:4px;top:5px" width="11" height="12" viewBox="0 0 11 12"><defs><linearGradient id="gtag" x1="0" y1="0" x2="0" y2="1"><stop offset="0" stop-color="#9a9a9a"/><stop offset="1" stop-color="#6a6a6a"/></linearGradient></defs><path d="M2 6l4.600-5.500h4v11.300h-4z" fill="url(#gtag)" stroke="#3a3a3a" stroke-width=".7"/><path d="M10.600 .5v11.300h-4" fill="none" stroke="#222" stroke-width=".9"/><circle cx="5.300" cy="6" r=".95" fill="#111"/><circle cx="8.200" cy="6" r=".95" fill="#111"/><rect x="0" y="5.100" width="2.200" height="1.900" fill="#0000ff"/></svg>
<svg class="ic" style="left:75px;top:6px" width="7" height="10" viewBox="0 0 7 12"><defs><linearGradient id="gtc" x1="0" x2="1"><stop offset="0" stop-color="#d89000"/><stop offset=".4" stop-color="#ffe680"/><stop offset="1" stop-color="#e0a000"/></linearGradient></defs><path d="M.3 2v8c0 2 6.400 2 6.400 0v-8z" fill="url(#gtc)"/><ellipse cx="3.500" cy="2" rx="3.200" ry="1.500" fill="#ffd850"/></svg>
<span style="left:96px">Id</span>
<svg class="abs" style="left:218px;top:8px" width="8" height="8" viewBox="0 0 8 8"><path d="M4 1L7.300 7H.7Z" fill="#fff" stroke="#333" stroke-width=".9"/></svg>
<span style="left:234px">號碼</span>
<b style="left:68px"></b>
<b style="left:90px"></b>
<b style="left:228px"></b>
<b style="left:287px"></b>
</div>
<div class="trow" style="left:11px;top:63.2px">
<svg class="ic" style="left:2px;top:3px" width="11" height="12" viewBox="0 0 11 12"><defs><linearGradient id="gtag" x1="0" y1="0" x2="0" y2="1"><stop offset="0" stop-color="#9a9a9a"/><stop offset="1" stop-color="#6a6a6a"/></linearGradient></defs><path d="M2 6l4.600-5.500h4v11.300h-4z" fill="url(#gtag)" stroke="#3a3a3a" stroke-width=".7"/><path d="M10.600 .5v11.300h-4" fill="none" stroke="#222" stroke-width=".9"/><circle cx="5.300" cy="6" r=".95" fill="#111"/><circle cx="8.200" cy="6" r=".95" fill="#111"/><rect x="0" y="5.100" width="2.200" height="1.900" fill="#0000ff"/></svg>
<span style="left:16px">站:1</span>
<span style="left:233px">0</span>
<b style="left:69px"></b>
<b style="left:91px"></b>
<b style="left:229px"></b>
<b style="left:288px"></b>
</div>
<div class="trow alt" style="left:11px;top:81.2px">
<svg class="ic" style="left:2px;top:3px" width="11" height="12" viewBox="0 0 11 12"><defs><linearGradient id="gtag" x1="0" y1="0" x2="0" y2="1"><stop offset="0" stop-color="#9a9a9a"/><stop offset="1" stop-color="#6a6a6a"/></linearGradient></defs><path d="M2 6l4.600-5.500h4v11.300h-4z" fill="url(#gtag)" stroke="#3a3a3a" stroke-width=".7"/><path d="M10.600 .5v11.300h-4" fill="none" stroke="#222" stroke-width=".9"/><circle cx="5.300" cy="6" r=".95" fill="#111"/><circle cx="8.200" cy="6" r=".95" fill="#111"/><rect x="0" y="5.100" width="2.200" height="1.900" fill="#0000ff"/></svg>
<span style="left:16px">站:2</span>
<span style="left:233px">0</span>
<b style="left:69px"></b>
<b style="left:91px"></b>
<b style="left:229px"></b>
<b style="left:288px"></b>
</div>
<div class="trow" style="left:11px;top:99.2px">
<svg class="ic" style="left:2px;top:3px" width="11" height="12" viewBox="0 0 11 12"><defs><linearGradient id="gtag" x1="0" y1="0" x2="0" y2="1"><stop offset="0" stop-color="#9a9a9a"/><stop offset="1" stop-color="#6a6a6a"/></linearGradient></defs><path d="M2 6l4.600-5.500h4v11.300h-4z" fill="url(#gtag)" stroke="#3a3a3a" stroke-width=".7"/><path d="M10.600 .5v11.300h-4" fill="none" stroke="#222" stroke-width=".9"/><circle cx="5.300" cy="6" r=".95" fill="#111"/><circle cx="8.200" cy="6" r=".95" fill="#111"/><rect x="0" y="5.100" width="2.200" height="1.900" fill="#0000ff"/></svg>
<span style="left:16px">站:3</span>
<span style="left:233px">0</span>
<b style="left:69px"></b>
<b style="left:91px"></b>
<b style="left:229px"></b>
<b style="left:288px"></b>
</div>
<div class="trow alt" style="left:11px;top:117.2px">
<svg class="ic" style="left:2px;top:3px" width="11" height="12" viewBox="0 0 11 12"><defs><linearGradient id="gtag" x1="0" y1="0" x2="0" y2="1"><stop offset="0" stop-color="#9a9a9a"/><stop offset="1" stop-color="#6a6a6a"/></linearGradient></defs><path d="M2 6l4.600-5.500h4v11.300h-4z" fill="url(#gtag)" stroke="#3a3a3a" stroke-width=".7"/><path d="M10.600 .5v11.300h-4" fill="none" stroke="#222" stroke-width=".9"/><circle cx="5.300" cy="6" r=".95" fill="#111"/><circle cx="8.200" cy="6" r=".95" fill="#111"/><rect x="0" y="5.100" width="2.200" height="1.900" fill="#0000ff"/></svg>
<span style="left:16px">站:4</span>
<span style="left:233px">0</span>
<b style="left:69px"></b>
<b style="left:91px"></b>
<b style="left:229px"></b>
<b style="left:288px"></b>
</div>
<div class="trow" style="left:11px;top:135.2px">
<svg class="ic" style="left:2px;top:3px" width="11" height="12" viewBox="0 0 11 12"><defs><linearGradient id="gtag" x1="0" y1="0" x2="0" y2="1"><stop offset="0" stop-color="#9a9a9a"/><stop offset="1" stop-color="#6a6a6a"/></linearGradient></defs><path d="M2 6l4.600-5.500h4v11.300h-4z" fill="url(#gtag)" stroke="#3a3a3a" stroke-width=".7"/><path d="M10.600 .5v11.300h-4" fill="none" stroke="#222" stroke-width=".9"/><circle cx="5.300" cy="6" r=".95" fill="#111"/><circle cx="8.200" cy="6" r=".95" fill="#111"/><rect x="0" y="5.100" width="2.200" height="1.900" fill="#0000ff"/></svg>
<span style="left:16px">站:5</span>
<span style="left:233px">0</span>
<b style="left:69px"></b>
<b style="left:91px"></b>
<b style="left:229px"></b>
<b style="left:288px"></b>
</div>
<div class="trow alt sel" style="left:11px;top:153.2px">
<svg class="ic" style="left:2px;top:3px" width="11" height="12" viewBox="0 0 11 12"><defs><linearGradient id="gtag" x1="0" y1="0" x2="0" y2="1"><stop offset="0" stop-color="#9a9a9a"/><stop offset="1" stop-color="#6a6a6a"/></linearGradient></defs><path d="M2 6l4.600-5.500h4v11.300h-4z" fill="url(#gtag)" stroke="#3a3a3a" stroke-width=".7"/><path d="M10.600 .5v11.300h-4" fill="none" stroke="#222" stroke-width=".9"/><circle cx="5.300" cy="6" r=".95" fill="#111"/><circle cx="8.200" cy="6" r=".95" fill="#111"/><rect x="0" y="5.100" width="2.200" height="1.900" fill="#0000ff"/></svg>
<span style="left:16px">站:11</span>
<svg class="ic" style="left:93px;top:2px" width="9" height="13" viewBox="0 0 10 14"><path d="M.5 .5h3l1 2.500 3-3h2v7l-3.500 6.500-2-1.500-2-5.500z" fill="#555" stroke="#ddd" stroke-width=".7"/><path d="M2 1l1.500 4M8 1l-4.500 8M9.500 3.500l-4.500 8" stroke="#fff" stroke-width="1"/></svg>
<span style="left:107px">CDR4</span>
<span style="left:233px">11</span>
<b style="left:69px"></b>
<b style="left:91px"></b>
<b style="left:229px"></b>
<b style="left:288px"></b>
</div>
<div class="trow" style="left:11px;top:171.2px">
<svg class="ic" style="left:2px;top:3px" width="11" height="12" viewBox="0 0 11 12"><defs><linearGradient id="gtag" x1="0" y1="0" x2="0" y2="1"><stop offset="0" stop-color="#9a9a9a"/><stop offset="1" stop-color="#6a6a6a"/></linearGradient></defs><path d="M2 6l4.600-5.500h4v11.300h-4z" fill="url(#gtag)" stroke="#3a3a3a" stroke-width=".7"/><path d="M10.600 .5v11.300h-4" fill="none" stroke="#222" stroke-width=".9"/><circle cx="5.300" cy="6" r=".95" fill="#111"/><circle cx="8.200" cy="6" r=".95" fill="#111"/><rect x="0" y="5.100" width="2.200" height="1.900" fill="#0000ff"/></svg>
<span style="left:16px">站:12</span>
<span style="left:233px">0</span>
<b style="left:69px"></b>
<b style="left:91px"></b>
<b style="left:229px"></b>
<b style="left:288px"></b>
</div>
<div class="trow alt" style="left:11px;top:189.2px">
<svg class="ic" style="left:2px;top:3px" width="11" height="12" viewBox="0 0 11 12"><defs><linearGradient id="gtag" x1="0" y1="0" x2="0" y2="1"><stop offset="0" stop-color="#9a9a9a"/><stop offset="1" stop-color="#6a6a6a"/></linearGradient></defs><path d="M2 6l4.600-5.500h4v11.300h-4z" fill="url(#gtag)" stroke="#3a3a3a" stroke-width=".7"/><path d="M10.600 .5v11.300h-4" fill="none" stroke="#222" stroke-width=".9"/><circle cx="5.300" cy="6" r=".95" fill="#111"/><circle cx="8.200" cy="6" r=".95" fill="#111"/><rect x="0" y="5.100" width="2.200" height="1.900" fill="#0000ff"/></svg>
<span style="left:16px">站:13</span>
<span style="left:233px">0</span>
<b style="left:69px"></b>
<b style="left:91px"></b>
<b style="left:229px"></b>
<b style="left:288px"></b>
</div>
<div class="trow" style="left:11px;top:207.2px">
<svg class="ic" style="left:2px;top:3px" width="11" height="12" viewBox="0 0 11 12"><defs><linearGradient id="gtag" x1="0" y1="0" x2="0" y2="1"><stop offset="0" stop-color="#9a9a9a"/><stop offset="1" stop-color="#6a6a6a"/></linearGradient></defs><path d="M2 6l4.600-5.500h4v11.300h-4z" fill="url(#gtag)" stroke="#3a3a3a" stroke-width=".7"/><path d="M10.600 .5v11.300h-4" fill="none" stroke="#222" stroke-width=".9"/><circle cx="5.300" cy="6" r=".95" fill="#111"/><circle cx="8.200" cy="6" r=".95" fill="#111"/><rect x="0" y="5.100" width="2.200" height="1.900" fill="#0000ff"/></svg>
<span style="left:16px">站:14</span>
<span style="left:233px">0</span>
<b style="left:69px"></b>
<b style="left:91px"></b>
<b style="left:229px"></b>
<b style="left:288px"></b>
</div>
<div class="trow alt" style="left:11px;top:225.2px">
<svg class="ic" style="left:2px;top:3px" width="11" height="12" viewBox="0 0 11 12"><defs><linearGradient id="gtag" x1="0" y1="0" x2="0" y2="1"><stop offset="0" stop-color="#9a9a9a"/><stop offset="1" stop-color="#6a6a6a"/></linearGradient></defs><path d="M2 6l4.600-5.500h4v11.300h-4z" fill="url(#gtag)" stroke="#3a3a3a" stroke-width=".7"/><path d="M10.600 .5v11.300h-4" fill="none" stroke="#222" stroke-width=".9"/><circle cx="5.300" cy="6" r=".95" fill="#111"/><circle cx="8.200" cy="6" r=".95" fill="#111"/><rect x="0" y="5.100" width="2.200" height="1.900" fill="#0000ff"/></svg>
<span style="left:16px">站:21</span>
<span style="left:233px">0</span>
<b style="left:69px"></b>
<b style="left:91px"></b>
<b style="left:229px"></b>
<b style="left:288px"></b>
</div>
<div class="trow" style="left:11px;top:243.2px">
<svg class="ic" style="left:2px;top:3px" width="11" height="12" viewBox="0 0 11 12"><defs><linearGradient id="gtag" x1="0" y1="0" x2="0" y2="1"><stop offset="0" stop-color="#9a9a9a"/><stop offset="1" stop-color="#6a6a6a"/></linearGradient></defs><path d="M2 6l4.600-5.500h4v11.300h-4z" fill="url(#gtag)" stroke="#3a3a3a" stroke-width=".7"/><path d="M10.600 .5v11.300h-4" fill="none" stroke="#222" stroke-width=".9"/><circle cx="5.300" cy="6" r=".95" fill="#111"/><circle cx="8.200" cy="6" r=".95" fill="#111"/><rect x="0" y="5.100" width="2.200" height="1.900" fill="#0000ff"/></svg>
<span style="left:16px">站:22</span>
<span style="left:233px">0</span>
<b style="left:69px"></b>
<b style="left:91px"></b>
<b style="left:229px"></b>
<b style="left:288px"></b>
</div>
<div class="trow alt" style="left:11px;top:261.2px">
<svg class="ic" style="left:2px;top:3px" width="11" height="12" viewBox="0 0 11 12"><defs><linearGradient id="gtag" x1="0" y1="0" x2="0" y2="1"><stop offset="0" stop-color="#9a9a9a"/><stop offset="1" stop-color="#6a6a6a"/></linearGradient></defs><path d="M2 6l4.600-5.500h4v11.300h-4z" fill="url(#gtag)" stroke="#3a3a3a" stroke-width=".7"/><path d="M10.600 .5v11.300h-4" fill="none" stroke="#222" stroke-width=".9"/><circle cx="5.300" cy="6" r=".95" fill="#111"/><circle cx="8.200" cy="6" r=".95" fill="#111"/><rect x="0" y="5.100" width="2.200" height="1.900" fill="#0000ff"/></svg>
<span style="left:16px">站:23</span>
<span style="left:233px">0</span>
<b style="left:69px"></b>
<b style="left:91px"></b>
<b style="left:229px"></b>
<b style="left:288px"></b>
</div>
<div class="trow" style="left:11px;top:279.2px">
<svg class="ic" style="left:2px;top:3px" width="11" height="12" viewBox="0 0 11 12"><defs><linearGradient id="gtag" x1="0" y1="0" x2="0" y2="1"><stop offset="0" stop-color="#9a9a9a"/><stop offset="1" stop-color="#6a6a6a"/></linearGradient></defs><path d="M2 6l4.600-5.500h4v11.300h-4z" fill="url(#gtag)" stroke="#3a3a3a" stroke-width=".7"/><path d="M10.600 .5v11.300h-4" fill="none" stroke="#222" stroke-width=".9"/><circle cx="5.300" cy="6" r=".95" fill="#111"/><circle cx="8.200" cy="6" r=".95" fill="#111"/><rect x="0" y="5.100" width="2.200" height="1.900" fill="#0000ff"/></svg>
<span style="left:16px">站:24</span>
<span style="left:233px">0</span>
<b style="left:69px"></b>
<b style="left:91px"></b>
<b style="left:229px"></b>
<b style="left:288px"></b>
</div>
<div class="trow alt" style="left:11px;top:297.2px">
<svg class="ic" style="left:2px;top:3px" width="11" height="12" viewBox="0 0 11 12"><defs><linearGradient id="gtag" x1="0" y1="0" x2="0" y2="1"><stop offset="0" stop-color="#9a9a9a"/><stop offset="1" stop-color="#6a6a6a"/></linearGradient></defs><path d="M2 6l4.600-5.500h4v11.300h-4z" fill="url(#gtag)" stroke="#3a3a3a" stroke-width=".7"/><path d="M10.600 .5v11.300h-4" fill="none" stroke="#222" stroke-width=".9"/><circle cx="5.300" cy="6" r=".95" fill="#111"/><circle cx="8.200" cy="6" r=".95" fill="#111"/><rect x="0" y="5.100" width="2.200" height="1.900" fill="#0000ff"/></svg>
<span style="left:16px">站:25</span>
<span style="left:233px">0</span>
<b style="left:69px"></b>
<b style="left:91px"></b>
<b style="left:229px"></b>
<b style="left:288px"></b>
</div>
<div class="trow" style="left:11px;top:315.2px">
<svg class="ic" style="left:2px;top:3px" width="11" height="12" viewBox="0 0 11 12"><defs><linearGradient id="gtag" x1="0" y1="0" x2="0" y2="1"><stop offset="0" stop-color="#9a9a9a"/><stop offset="1" stop-color="#6a6a6a"/></linearGradient></defs><path d="M2 6l4.600-5.500h4v11.300h-4z" fill="url(#gtag)" stroke="#3a3a3a" stroke-width=".7"/><path d="M10.600 .5v11.300h-4" fill="none" stroke="#222" stroke-width=".9"/><circle cx="5.300" cy="6" r=".95" fill="#111"/><circle cx="8.200" cy="6" r=".95" fill="#111"/><rect x="0" y="5.100" width="2.200" height="1.900" fill="#0000ff"/></svg>
<span style="left:16px">站:26</span>
<span style="left:233px">0</span>
<b style="left:69px"></b>
<b style="left:91px"></b>
<b style="left:229px"></b>
<b style="left:288px"></b>
</div>
<div class="trow alt" style="left:11px;top:333.2px">
<svg class="ic" style="left:2px;top:3px" width="11" height="12" viewBox="0 0 11 12"><defs><linearGradient id="gtag" x1="0" y1="0" x2="0" y2="1"><stop offset="0" stop-color="#9a9a9a"/><stop offset="1" stop-color="#6a6a6a"/></linearGradient></defs><path d="M2 6l4.600-5.500h4v11.300h-4z" fill="url(#gtag)" stroke="#3a3a3a" stroke-width=".7"/><path d="M10.600 .5v11.300h-4" fill="none" stroke="#222" stroke-width=".9"/><circle cx="5.300" cy="6" r=".95" fill="#111"/><circle cx="8.200" cy="6" r=".95" fill="#111"/><rect x="0" y="5.100" width="2.200" height="1.900" fill="#0000ff"/></svg>
<span style="left:16px">站:27</span>
<span style="left:233px">0</span>
<b style="left:69px"></b>
<b style="left:91px"></b>
<b style="left:229px"></b>
<b style="left:288px"></b>
</div>
<div class="trow" style="left:11px;top:351.2px">
<svg class="ic" style="left:2px;top:3px" width="11" height="12" viewBox="0 0 11 12"><defs><linearGradient id="gtag" x1="0" y1="0" x2="0" y2="1"><stop offset="0" stop-color="#9a9a9a"/><stop offset="1" stop-color="#6a6a6a"/></linearGradient></defs><path d="M2 6l4.600-5.500h4v11.300h-4z" fill="url(#gtag)" stroke="#3a3a3a" stroke-width=".7"/><path d="M10.600 .5v11.300h-4" fill="none" stroke="#222" stroke-width=".9"/><circle cx="5.300" cy="6" r=".95" fill="#111"/><circle cx="8.200" cy="6" r=".95" fill="#111"/><rect x="0" y="5.100" width="2.200" height="1.900" fill="#0000ff"/></svg>
<span style="left:16px">站:28</span>
<span style="left:233px">0</span>
<b style="left:69px"></b>
<b style="left:91px"></b>
<b style="left:229px"></b>
<b style="left:288px"></b>
</div>
<div class="gtitle" style="top:368px">
<svg class="abs" style="left:1px;top:7px" width="9" height="9" viewBox="0 0 9 9"><rect x=".5" y=".5" width="8" height="8" fill="#fff" stroke="#9a9a9a"/><path d="M2 4.500h5" stroke="#444"/></svg>
<svg class="ic" style="left:11px;top:3px" width="13" height="15" viewBox="0 0 13 15"><path d="M4.500 3.200h4l2.300 2.300v4l-2.300 2.300h-4l-2.300-2.300v-4z" fill="#8a8a8a"/><circle cx="6.500" cy="7.500" r="1.100" fill="#d0d0d0"/><rect x="5.700" y="0.300" width="1.600" height="1.600" fill="#0000ff"/><rect x="5.700" y="13" width="1.600" height="1.600" fill="#0000ff"/><rect x="0" y="6.700" width="1.600" height="1.600" fill="#0000ff"/><rect x="11.400" y="6.700" width="1.600" height="1.600" fill="#0000ff"/></svg>
<span class="abs" style="left:28px;top:0">2 - Gang2(T1-T4): 4 元件(s)</span>
</div>
<div class="thead" style="left:11px;top:390px">
<svg class="ic" style="left:4px;top:5px" width="11" height="12" viewBox="0 0 11 12"><defs><linearGradient id="gtag" x1="0" y1="0" x2="0" y2="1"><stop offset="0" stop-color="#9a9a9a"/><stop offset="1" stop-color="#6a6a6a"/></linearGradient></defs><path d="M2 6l4.600-5.500h4v11.300h-4z" fill="url(#gtag)" stroke="#3a3a3a" stroke-width=".7"/><path d="M10.600 .5v11.300h-4" fill="none" stroke="#222" stroke-width=".9"/><circle cx="5.300" cy="6" r=".95" fill="#111"/><circle cx="8.200" cy="6" r=".95" fill="#111"/><rect x="0" y="5.100" width="2.200" height="1.900" fill="#0000ff"/></svg>
<svg class="ic" style="left:75px;top:6px" width="7" height="10" viewBox="0 0 7 12"><defs><linearGradient id="gtc" x1="0" x2="1"><stop offset="0" stop-color="#d89000"/><stop offset=".4" stop-color="#ffe680"/><stop offset="1" stop-color="#e0a000"/></linearGradient></defs><path d="M.3 2v8c0 2 6.400 2 6.400 0v-8z" fill="url(#gtc)"/><ellipse cx="3.500" cy="2" rx="3.200" ry="1.500" fill="#ffd850"/></svg>
<span style="left:96px">Id</span>
<svg class="abs" style="left:218px;top:8px" width="8" height="8" viewBox="0 0 8 8"><path d="M4 1L7.300 7H.7Z" fill="#fff" stroke="#333" stroke-width=".9"/></svg>
<span style="left:234px">號碼</span>
<b style="left:68px"></b>
<b style="left:90px"></b>
<b style="left:228px"></b>
<b style="left:287px"></b>
</div>
<div class="trow" style="left:11px;top:413.6px">
<svg class="ic" style="left:2px;top:3px" width="11" height="12" viewBox="0 0 11 12"><defs><linearGradient id="gtag" x1="0" y1="0" x2="0" y2="1"><stop offset="0" stop-color="#9a9a9a"/><stop offset="1" stop-color="#6a6a6a"/></linearGradient></defs><path d="M2 6l4.600-5.500h4v11.300h-4z" fill="url(#gtag)" stroke="#3a3a3a" stroke-width=".7"/><path d="M10.600 .5v11.300h-4" fill="none" stroke="#222" stroke-width=".9"/><circle cx="5.300" cy="6" r=".95" fill="#111"/><circle cx="8.200" cy="6" r=".95" fill="#111"/><rect x="0" y="5.100" width="2.200" height="1.900" fill="#0000ff"/></svg>
<span style="left:16px">站:31</span>
<span style="left:233px">0</span>
<b style="left:69px"></b>
<b style="left:91px"></b>
<b style="left:229px"></b>
<b style="left:288px"></b>
</div>
<div class="trow alt" style="left:11px;top:431.6px">
<svg class="ic" style="left:2px;top:3px" width="11" height="12" viewBox="0 0 11 12"><defs><linearGradient id="gtag" x1="0" y1="0" x2="0" y2="1"><stop offset="0" stop-color="#9a9a9a"/><stop offset="1" stop-color="#6a6a6a"/></linearGradient></defs><path d="M2 6l4.600-5.500h4v11.300h-4z" fill="url(#gtag)" stroke="#3a3a3a" stroke-width=".7"/><path d="M10.600 .5v11.300h-4" fill="none" stroke="#222" stroke-width=".9"/><circle cx="5.300" cy="6" r=".95" fill="#111"/><circle cx="8.200" cy="6" r=".95" fill="#111"/><rect x="0" y="5.100" width="2.200" height="1.900" fill="#0000ff"/></svg>
<span style="left:16px">站:32</span>
<span style="left:233px">0</span>
<b style="left:69px"></b>
<b style="left:91px"></b>
<b style="left:229px"></b>
<b style="left:288px"></b>
</div>
<div class="trow" style="left:11px;top:449.6px">
<svg class="ic" style="left:2px;top:3px" width="11" height="12" viewBox="0 0 11 12"><defs><linearGradient id="gtag" x1="0" y1="0" x2="0" y2="1"><stop offset="0" stop-color="#9a9a9a"/><stop offset="1" stop-color="#6a6a6a"/></linearGradient></defs><path d="M2 6l4.600-5.500h4v11.300h-4z" fill="url(#gtag)" stroke="#3a3a3a" stroke-width=".7"/><path d="M10.600 .5v11.300h-4" fill="none" stroke="#222" stroke-width=".9"/><circle cx="5.300" cy="6" r=".95" fill="#111"/><circle cx="8.200" cy="6" r=".95" fill="#111"/><rect x="0" y="5.100" width="2.200" height="1.900" fill="#0000ff"/></svg>
<span style="left:16px">站:33</span>
<span style="left:233px">0</span>
<b style="left:69px"></b>
<b style="left:91px"></b>
<b style="left:229px"></b>
<b style="left:288px"></b>
</div>
<div class="trow alt" style="left:11px;top:467.6px">
<svg class="ic" style="left:2px;top:3px" width="11" height="12" viewBox="0 0 11 12"><defs><linearGradient id="gtag" x1="0" y1="0" x2="0" y2="1"><stop offset="0" stop-color="#9a9a9a"/><stop offset="1" stop-color="#6a6a6a"/></linearGradient></defs><path d="M2 6l4.600-5.500h4v11.300h-4z" fill="url(#gtag)" stroke="#3a3a3a" stroke-width=".7"/><path d="M10.600 .5v11.300h-4" fill="none" stroke="#222" stroke-width=".9"/><circle cx="5.300" cy="6" r=".95" fill="#111"/><circle cx="8.200" cy="6" r=".95" fill="#111"/><rect x="0" y="5.100" width="2.200" height="1.900" fill="#0000ff"/></svg>
<span style="left:16px">站:34</span>
<span style="left:233px">0</span>
<b style="left:69px"></b>
<b style="left:91px"></b>
<b style="left:229px"></b>
<b style="left:288px"></b>
</div>
<div class="gtitle" style="top:485px">
<svg class="abs" style="left:1px;top:7px" width="9" height="9" viewBox="0 0 9 9"><rect x=".5" y=".5" width="8" height="8" fill="#fff" stroke="#9a9a9a"/><path d="M2 4.500h5" stroke="#444"/></svg>
<span class="abs" style="left:13px;top:0">3 - Gang3: 1 元件(s)</span>
</div>
<div class="thead" style="left:11px;top:507px">
<svg class="ic" style="left:4px;top:5px" width="11" height="12" viewBox="0 0 11 12"><defs><linearGradient id="gtag" x1="0" y1="0" x2="0" y2="1"><stop offset="0" stop-color="#9a9a9a"/><stop offset="1" stop-color="#6a6a6a"/></linearGradient></defs><path d="M2 6l4.600-5.500h4v11.300h-4z" fill="url(#gtag)" stroke="#3a3a3a" stroke-width=".7"/><path d="M10.600 .5v11.300h-4" fill="none" stroke="#222" stroke-width=".9"/><circle cx="5.300" cy="6" r=".95" fill="#111"/><circle cx="8.200" cy="6" r=".95" fill="#111"/><rect x="0" y="5.100" width="2.200" height="1.900" fill="#0000ff"/></svg>
<svg class="ic" style="left:75px;top:6px" width="7" height="10" viewBox="0 0 7 12"><defs><linearGradient id="gtc" x1="0" x2="1"><stop offset="0" stop-color="#d89000"/><stop offset=".4" stop-color="#ffe680"/><stop offset="1" stop-color="#e0a000"/></linearGradient></defs><path d="M.3 2v8c0 2 6.400 2 6.400 0v-8z" fill="url(#gtc)"/><ellipse cx="3.500" cy="2" rx="3.200" ry="1.500" fill="#ffd850"/></svg>
<span style="left:96px">Id</span>
<svg class="abs" style="left:218px;top:8px" width="8" height="8" viewBox="0 0 8 8"><path d="M4 1L7.300 7H.7Z" fill="#fff" stroke="#333" stroke-width=".9"/></svg>
<span style="left:234px">號碼</span>
<b style="left:68px"></b>
<b style="left:90px"></b>
<b style="left:228px"></b>
<b style="left:287px"></b>
</div>
<div class="trow" style="left:11px;top:530.2px">
<svg class="ic" style="left:2px;top:3px" width="11" height="12" viewBox="0 0 11 12"><defs><linearGradient id="gtag" x1="0" y1="0" x2="0" y2="1"><stop offset="0" stop-color="#9a9a9a"/><stop offset="1" stop-color="#6a6a6a"/></linearGradient></defs><path d="M2 6l4.600-5.500h4v11.300h-4z" fill="url(#gtag)" stroke="#3a3a3a" stroke-width=".7"/><path d="M10.600 .5v11.300h-4" fill="none" stroke="#222" stroke-width=".9"/><circle cx="5.300" cy="6" r=".95" fill="#111"/><circle cx="8.200" cy="6" r=".95" fill="#111"/><rect x="0" y="5.100" width="2.200" height="1.900" fill="#0000ff"/></svg>
<span style="left:16px">站:20</span>
<span style="left:233px">0</span>
<b style="left:69px"></b>
<b style="left:91px"></b>
<b style="left:229px"></b>
<b style="left:288px"></b>
</div>
<div class="abs" style="left:0;top:986px;width:304px;height:12px;background:#f0f0f0"></div>
<div class="abs" style="left:12px;top:991px;width:143px;height:1px;background:#8a8a8a"></div>
<div class="abs" style="left:304px;top:0;width:2px;height:1003px;background:#dfe9f3"></div>
</div>
<div class="abs" style="left:7px;top:15px;width:1px;height:998px;background:#fff"></div>
<div class="abs" style="left:6px;top:13px;width:1px;height:1000px;background:#3a3a3a"></div>
</div>
<div class="abs" style="left:4px;top:1141px;width:310px;height:1px;background:#666"></div>
<div class="tab" style="left:13px;width:45px;border-top:1px solid #666;"><svg class="ic" style="left:3px;top:1px" width="12" height="11" viewBox="0 0 13 12"><rect x=".5" y=".5" width="12" height="11" fill="#fff" stroke="#000" stroke-width="1"/><rect x=".5" y=".5" width="12" height="2.500" fill="#2040e0"/><path d="M2 5h9v5h-9zM2 7.500h9M4 10v-2.500M9 10v-2.500" fill="none" stroke="#000" stroke-width=".9"/></svg><span class="abs" style="left:16.500px;top:0px">特徵</span></div>
<div class="tab" style="left:60px;width:46px;font-weight:bold;"><svg class="ic" style="left:3px;top:2px" width="12" height="11" viewBox="0 0 13 12"><rect x=".5" y="2" width="8" height="9.500" fill="#fff" stroke="#000" stroke-width=".9"/><rect x=".5" y="2" width="8" height="2" fill="#2040e0"/><path d="M.5 6.500h8M.5 9h8M3.500 4v7.500" stroke="#777" stroke-width=".7"/><path d="M8.500 .5h3v9l-1.500 2-1.500-2z" fill="#fff" stroke="#000" stroke-width="1"/><rect x="8.500" y=".3" width="3" height="2" fill="#000"/></svg><span class="abs" style="left:16.500px;top:1px">工具</span></div>
<div class="tab" style="left:108px;width:45px;border-top:1px solid #666;"><svg class="ic" style="left:3px;top:1px" width="12" height="11" viewBox="0 0 13 12"><rect x=".5" y="1" width="12" height="10" fill="#fff" stroke="#000080" stroke-width="1"/><rect x=".5" y="1" width="12" height="2.200" fill="#000080"/><path d="M1 5.500h4M8 5.500h4.500M1 8.500h4M8 8.500h4.500" stroke="#e00000" stroke-width="1.600"/><path d="M6.500 3v8" stroke="#000080" stroke-width="1"/></svg><span class="abs" style="left:16.500px;top:0px">工法</span></div>
<div class="tab" style="left:155px;width:45px;border-top:1px solid #666;"><svg class="ic" style="left:3px;top:1px" width="12" height="11" viewBox="0 0 13 12"><rect x="1" y=".5" width="11" height="11" fill="#fff" stroke="#000" stroke-width="1"/><path d="M3 3.500h7M3 6h5M3 8.500h7" stroke="#000" stroke-width="1"/></svg><span class="abs" style="left:16.500px;top:0px">註解</span></div>
<div class="tab" style="left:202px;width:45px;border-top:1px solid #666;"><svg class="ic" style="left:3px;top:1px" width="12" height="11" viewBox="0 0 13 12"><path d="M3 4l5-3.500 4.500 1.500-4.500 4z" fill="#f0e080" stroke="#a08000" stroke-width=".5"/><path d="M3 4l4.500 2.500v5.500l-3.500-3z" fill="#e02020"/><path d="M7.500 6.500l4.500-4.500v5.500l-4.500 4.500z" fill="#2030d0"/><path d="M7.500 6.500l3-3v4l-3 4z" fill="#20a030"/></svg><span class="abs" style="left:16.500px;top:0px">實體</span></div>
<div class="tab" style="left:249px;width:46px;border-top:1px solid #666;"><svg class="ic" style="left:3px;top:1px" width="12" height="11" viewBox="0 0 13 12"><rect x="1.500" y="1.500" width="10" height="8.500" fill="#fff" stroke="#e00000" stroke-width="1.200"/><path d="M3.500 10v2M9.500 10v2" stroke="#20a020" stroke-width="1.400"/><path d="M2 11h3l-1.500-2zM8 11h3l-1.500-2z" fill="#20a020"/><path d="M5 1.500h3" stroke="#fff" stroke-width="1.400"/></svg><span class="abs" style="left:16.500px;top:0px">測量</span></div>
<div class="abs" style="left:322px;top:125px;width:179px;height:1037px;background:#fff;border-left:1px solid #8c8c8c"></div>
<div class="abs" style="left:500px;top:124px;width:2px;height:1038px;background:linear-gradient(90deg,#b4b4b4,#868686)"></div>
<div class="abs" style="left:500px;top:124px;width:1118px;height:1px;background:#8a8a8a"></div>
<div class="vtb" style="left:323px;top:125px;width:34px;height:218px">
<div class="vgrip" style="top:3px"></div>
<svg class="ic" style="left:3.5px;top:11px" width="24" height="24" viewBox="0 0 24 24"><rect x="2" y="1.500" width="7" height="7" rx="1" fill="#fff" stroke="#1c2a3a" stroke-width="1.400"/><path d="M13.500 5h10" stroke="#1c3a4a" stroke-width="1.800"/><rect x="2" y="13" width="7" height="7" rx="1" fill="#fff" stroke="#1c2a3a" stroke-width="1.400"/><path d="M3.500 16l2.200 2.500 5-6.500" fill="none" stroke="#1c2a3a" stroke-width="1.600"/><path d="M13.500 16.500h10" stroke="#1c3a4a" stroke-width="1.800"/></svg>
<svg class="ic" style="left:3.5px;top:40px" width="24" height="24" viewBox="0 0 24 24"><path d="M1 2h13.500l8.500 8.500h-13.500z" fill="none" stroke="#e08000" stroke-width="1.700"/><path d="M1.500 14h13l8 8h-13z" fill="none" stroke="#000" stroke-width="1.400"/></svg>
<svg class="ic" style="left:3.5px;top:69px" width="24" height="24" viewBox="0 0 24 24"><path d="M1 2.500h13.500l8.500 8h-13.500z" fill="none" stroke="#e08000" stroke-width="1.700"/><path d="M1.500 14.200h12.500l8 8h-12.500z" fill="none" stroke="#000" stroke-width="1.400"/><path d="M17.300 12v12M11 18.200h12.500" stroke="#10a040" stroke-width="2"/></svg>
<svg class="ic" style="left:3.5px;top:99px" width="24" height="24" viewBox="0 0 24 24"><rect x="1.500" y="1.500" width="13" height="9.500" fill="#fff" stroke="#a8b8d8" stroke-width=".9"/><rect x="1.500" y="1.500" width="13" height="2" fill="#c8d8f0"/><rect x="9.500" y="7" width="12.500" height="9.500" fill="#fff" stroke="#80a8e8" stroke-width=".9"/><rect x="9.500" y="7" width="12.500" height="2.200" fill="#70a8f0"/><circle cx="5.700" cy="18.500" r="3" fill="#60b0f0" stroke="#000" stroke-width="1.300"/><circle cx="12.300" cy="18.500" r="3" fill="#60b0f0" stroke="#000" stroke-width="1.300"/><path d="M4.500 15l1.500-1.500h1.500M13.500 15l-1.500-1.500h-1.500M8 17h2" stroke="#000" stroke-width="1.400" fill="none"/></svg>
<svg class="ic" style="left:3.5px;top:127px" width="24" height="24" viewBox="0 0 24 24"><rect x="0" y="0" width="24" height="24" fill="#0050ff"/><path d="M4 6.500h18v2.500h-18z" fill="#00e8e8" stroke="#000" stroke-width=".6"/><path d="M4 9h19v14.500h-19z" fill="#fff" stroke="#000" stroke-width="1.300"/><path d="M13 14h1.500M17 14h1.500M21 14h1M9 18.500h1.500M13 18.500h1.500M17 18.500h1.500" stroke="#c8c8c8" stroke-width="1.400"/><path d="M6.500 3.500l3.500-3 4 .5 2 2.500-3.500 3-4.500-.5z" fill="#e00000" stroke="#400" stroke-width=".7"/><path d="M7.500 3.500h7" stroke="#600" stroke-width=".8"/><path d="M1 13c1-3 5-4.500 8-3.500l.5 2.500-2 1-1.500-1-2.500 1-.5 2z" fill="#e8d800" stroke="#443800" stroke-width=".7"/><path d="M4 14l3-1 2.500.5-.5 1.500-4 .5z" fill="#807000"/></svg>
<svg class="ic" style="left:3.5px;top:156px" width="24" height="24" viewBox="0 0 24 24"><rect x="0" y="0" width="24" height="24" rx="4" fill="#000080"/><circle cx="11.500" cy="5" r="2.800" fill="#fff"/><text transform="translate(3.500 21.500) scale(1.550 1)" font-family="Liberation Serif,serif" font-weight="bold" font-size="21" fill="#fff">ı</text></svg>
<svg class="ic" style="left:3.5px;top:186px" width="24" height="24" viewBox="0 0 24 24"><path d="M1 5.500h12v17.500h-12z" fill="#fff" stroke="#707070" stroke-width="1.200"/><path d="M1.500 22.500h11.500v-3" fill="none" stroke="#555" stroke-width="1.200"/><path d="M5.500 13h6M5.500 15.500h6M5.500 18h6" stroke="#707070" stroke-width="1"/><text x="7.500" y="19.500" font-family="Liberation Sans,sans-serif" font-weight="bold" font-size="27" fill="#ffff00" stroke="#000" stroke-width="2.400" stroke-linejoin="round" paint-order="stroke">?</text></svg>
</div>
<div class="vtb" style="left:323px;top:344px;width:34px;height:221px">
<div class="vgrip" style="top:3px"></div>
<svg class="ic" style="left:3.5px;top:11px" width="24" height="24" viewBox="0 0 24 24"><path d="M3 8.500l5-4.500h13v13l-5 4.500h-13z" fill="#fff" stroke="#000" stroke-width="1"/><path d="M3 8.500h13v13M16 8.500l5-4.500" fill="none" stroke="#000" stroke-width="1"/><path d="M6.500 14l3-2h4.500v5l-3 2z" fill="#fff" stroke="#000" stroke-width=".9"/><path d="M9.500 17l4.500-5v5l-4.500 5z" fill="#0000d0"/><rect x="2" y="16" width="7" height="7" fill="#fff" stroke="#ff0000" stroke-width="1"/></svg>
<svg class="ic" style="left:3.5px;top:41px" width="24" height="24" viewBox="0 0 24 24"><path d="M2 10c3-6 17-6 20.500 0l1.500 4.500-2 4h-3.500l-2-3.500c-2-2-6-2-8 0l-2 3.500h-3.500l-2-4z" fill="#fff" stroke="#0000c0" stroke-width="1.100"/><path d="M2 10c3-6 17-6 20.500 0l-4.500 0c-3-2-8-2-11.500 0z" fill="#0020e0"/><path d="M8 15c2-2 6-2 8 0l1.500 3h-11z" fill="#0000d0"/><path d="M1 13.500c0-3 5-3 5 0l.5 5h-3.500zM18.500 13.500c0-3 5-3 5 0l-2 5h-3.500z" fill="#fff" stroke="#ff0000" stroke-width=".9"/><path d="M12 4v20" stroke="#000" stroke-width=".8" stroke-dasharray="3 1 1 1"/><path d="M1.500 5.500c2-2 4.500-2.500 6.500-2.500" fill="none" stroke="#000" stroke-width=".9"/><path d="M9.500 3l-3-1.500v3z" fill="#000"/></svg>
<svg class="ic" style="left:3.5px;top:72px" width="24" height="24" viewBox="0 0 24 24"><rect x="7" y="6" width="15" height="17" fill="#fff"/><path d="M7 1.500h15.500M8 6.500h14.500M2.500 9v14M7 12v11" stroke="#000" stroke-width=".9"/><path d="M7 6.500h15.500" stroke="#888" stroke-width="1.400"/><path d="M2.500 9c0-5 3-7.500 6-7.500l4 4.500c-3 0-5.500 2-5.500 6z" fill="#f4f4f4" stroke="#ff0000" stroke-width=".9"/><path d="M2.500 9c1-3 3-4 5-4M8.500 1.500l4 4.500" stroke="#ff0000" stroke-width=".8" fill="none"/></svg>
<svg class="ic" style="left:3.5px;top:102px" width="24" height="24" viewBox="0 0 24 24"><path d="M.5 9l11-8h9c2 0 3.500 1.500 3.500 3.500v9l-10.500 9.500v-9c0-2-1-3-3-3.500z" fill="#2aa8e0" stroke="#102030" stroke-width=".9"/><path d="M.5 9l11-8h4l-9 8z" fill="#a8c8e0"/><path d="M13.500 23v-9c0-2-1-3-3-3.500l3-.5c2 0 3 2 3 4v6z" fill="#607890"/><path d="M15 1.500l-8.500 8M19 2c3 1 3.500 3 3.500 5" stroke="#c8ecff" stroke-width="1.400" fill="none"/><path d="M14 14l10-8v7.500l-10.500 9.500z" fill="#8098b0" opacity=".75"/></svg>
<svg class="ic" style="left:3.5px;top:131px" width="24" height="24" viewBox="0 0 24 24"><rect x="7" y="6" width="15" height="17" fill="#fff"/><path d="M7 1.500h15.500M12 6.500h10.500M2.500 9v14M7 12v11" stroke="#000" stroke-width=".9"/><path d="M2.500 6.500l5-5.500 5 5.500-5.500 5.500z" fill="#fafafa" stroke="#ff0000" stroke-width=".9"/></svg>
<svg class="ic" style="left:3.5px;top:162px" width="24" height="24" viewBox="0 0 24 24"><path d="M3 5.500l4-3.500h14v13.500l-4 4h-14z" fill="#f4f4f4" stroke="#303060" stroke-width="1"/><path d="M3 5.500h14v14M17 5.500l4-3.500" fill="none" stroke="#303060" stroke-width="1"/><rect x="3.500" y="6" width="6" height="13" fill="#00a0c8"/><path d="M9.500 6l1 13" stroke="#e02020" stroke-width="1"/><path d="M11 6.500c2 3 1 8 3 12l2-3c-1-3 0-6-2-9z" fill="#a8c8b0"/><path d="M17 5.500l4-3.500v13.500l-4 4z" fill="#fff" stroke="#303060" stroke-width=".8"/></svg>
<svg class="ic" style="left:3.5px;top:190px" width="24" height="24" viewBox="0 0 24 24"><path d="M.5 7c4-1 6-6.500 11-6.500 3 0 3 6 6 8.500 2 1.500 4 1 6 1.500-3 2-7 8-12 10-3 1-4-3-5-6.500-1-3-3-6-6-7z" fill="#38a8e0" stroke="#104060" stroke-width=".9"/><path d="M11.500 11c2 1 2 6 4 8-1 .5-3 1.500-4 1.500-3 1-4-3-5-6.500z" fill="#90c0e8"/><path d="M5 5l7 14M9 2.500l7 14" stroke="#b8e0f8" stroke-width=".9" fill="none"/><path d="M11.500 20.500c5-2 9-8 12-10l0 2c-3 2-7 8-12 10z" fill="#5080a0"/></svg>
</div>
<div class="vtb" style="left:358px;top:125px;width:34px;height:371px">
<div class="vgrip" style="top:3px"></div>
<svg class="ic" style="left:3.5px;top:11px" width="24" height="24" viewBox="0 0 24 24"><text x="-.5" y="18" font-family="Liberation Serif,serif" font-style="italic" font-size="26" fill="#000" textLength="25" lengthAdjust="spacingAndGlyphs">fx</text></svg>
<svg class="ic" style="left:3.5px;top:40px" width="24" height="24" viewBox="0 0 24 24"><path d="M21 2l-8.500 8" stroke="#ff8c20" stroke-width="1.600"/><path d="M11 11.500l1.500-5.500 4 4z" fill="#ff8c20"/><rect x="2.500" y="13" width="8" height="8" fill="#fff" stroke="#555" stroke-width="1.100"/><path d="M4 14.500l5 5M9 14.500l-5 5" stroke="#e00000" stroke-width="1.200"/></svg>
<svg class="ic" style="left:3.5px;top:69px" width="24" height="24" viewBox="0 0 24 24"><defs><linearGradient id="gch" x1="0" x2="1"><stop offset="0" stop-color="#444"/><stop offset=".45" stop-color="#c8c8c8"/><stop offset="1" stop-color="#222"/></linearGradient></defs><rect x="10" y="2" width="14" height="20" fill="#c0c0c0"/><rect x="0" y="0" width="10.500" height="24" fill="url(#gch)"/><rect x="10.500" y="6" width="5.500" height="11" fill="#0000d8"/><rect x="10.500" y="15" width="4" height="3" fill="#000"/><rect x="16" y="9" width="5" height="5" fill="#00c000"/><path d="M16.500 2.500c7 3 7 16 0 19" fill="none" stroke="#ff0000" stroke-width="1.300"/><path d="M16 1.500l5 .5-2 3.500zM16 22.500l5-.5-2-3.500z" fill="#ff0000"/></svg>
<svg class="ic" style="left:3.5px;top:99px" width="24" height="24" viewBox="0 0 24 24"><path d="M5.500 1h12l-1 6 1 5-2.500 4-3 2.500-3-2.500-2.500-4 1-5z" fill="#f03030" stroke="#000" stroke-width="1"/><path d="M7 4.500h10M6.500 8.500h11M7 12.500h10" stroke="#000" stroke-width=".8" stroke-dasharray="2 1"/><rect x="10" y="5" width="3" height="8" fill="#fff" opacity=".8"/><path d="M10 2.500l1.500-1 1.500 1-.5 1.500h-2z" fill="#600"/><rect x="0" y="17" width="6" height="6.500" fill="#222"/><rect x="17" y="17" width="7" height="6.500" fill="#222"/><path d="M1 20h4M18 19.500h5" stroke="#bbb" stroke-width="1.300"/></svg>
<svg class="ic" style="left:3.5px;top:127.5px" width="24" height="24" viewBox="0 0 24 24"><path d="M1.500 7h21v7l-10 9.500h-2l-9-9.500z" fill="#f4f4f4" stroke="#555" stroke-width="1"/><path d="M3.500 1c0 3 1 4.500 2.500 6" fill="none" stroke="#000" stroke-width="1.600"/><path d="M4 1c0 3 1 4.500 2.500 6" fill="none" stroke="#e0c000" stroke-width=".8"/><text x="10.500" y="17" font-family="Liberation Sans,sans-serif" font-weight="bold" font-size="6.500" fill="#f0b000">P0</text><path d="M10.500 18.500l3 3M13.500 18.500l-3 3" stroke="#f0b000" stroke-width=".8"/></svg>
<svg class="ic" style="left:3.5px;top:157px" width="24" height="24" viewBox="0 0 24 24"><path d="M1 1h19.500v18h-19.500z" fill="#707000" stroke="#303000" stroke-width=".9"/><rect x="3.500" y="1.500" width="15" height="9" fill="#c0c0c0"/><text x="3.300" y="9.300" font-family="Liberation Sans,sans-serif" font-size="8.500" fill="#e81030" textLength="15.500" lengthAdjust="spacingAndGlyphs">PRC</text><rect x="4" y="14" width="13" height="5" fill="#000"/><rect x="14" y="14.500" width="2.500" height="4" fill="#aaa"/><rect x="18.500" y="12" width="4.500" height="10.500" fill="#e8e8e8" stroke="#444" stroke-width=".7"/><path d="M19.500 14h2.500M19.500 16h2.500M19.500 18h2.500M19.500 20h2.500" stroke="#10a010" stroke-width="1.300"/></svg>
<svg class="ic" style="left:3.5px;top:186px" width="24" height="24" viewBox="0 0 24 24"><path d="M1 1.500h5.500l4 4v17h-9.500z" fill="#fff" stroke="#000" stroke-width="1.300"/><path d="M6.500 1.500v4h4" fill="none" stroke="#000" stroke-width="1.200"/><path d="M13 1.500h6l4.500 4v17h-10.500z" fill="#fff" stroke="#000" stroke-width="1.300"/><path d="M19 1.500v4h4.500" fill="none" stroke="#000" stroke-width="1.200"/><rect x="9" y="11" width="6" height="6" fill="#fff"/><path d="M5 14h14" stroke="#000" stroke-width="1.400"/><path d="M16.500 10.500l4 3.500-4 3.500" fill="none" stroke="#000" stroke-width="1.400"/></svg>
<svg class="ic" style="left:3.5px;top:216px" width="24" height="24" viewBox="0 0 24 24"><path d="M5 1h8l-1.500 3.500h-5z" fill="#fff" stroke="#000" stroke-width="1.300"/><path d="M7 4.500h4v12h-4z" fill="#fff" stroke="#000" stroke-width="1.200"/><path d="M7 6.500l4 1M7 9l4 1M7 11.500l4 1M7 14l4 1" stroke="#000" stroke-width=".9"/><path d="M1 14h4v5h8.500v-5h3.500v7l-3 2.500h-13z" fill="#fff" stroke="#000" stroke-width="1.300"/><path d="M13.500 14l3-2v9" fill="none" stroke="#000" stroke-width="1"/><text x="17" y="10.500" font-family="Liberation Sans,sans-serif" font-weight="bold" font-size="12" fill="#20b040">?</text></svg>
<svg class="ic" style="left:3.5px;top:245px" width="24" height="24" viewBox="0 0 24 24"><path d="M3.500 12c-1-5 2-10 8-11.500-3 3-3.500 6-3 9z" fill="#d0d0d0" stroke="#000" stroke-width="1"/><path d="M6 8h12v-2.500h3.500v8h-3.500v-2.500h-12z" fill="#e0e0e0" stroke="#000" stroke-width="1.100"/><path d="M4 12.500h5l.5 3.500h-6z" fill="#fff" stroke="#000" stroke-width="1"/><rect x="3" y="15.500" width="6.500" height="2" fill="#000"/><path d="M3.500 20.500h6" stroke="#20e030" stroke-width="1.800"/><path d="M9.500 20.500h12" stroke="#ff2020" stroke-width="1.800"/></svg>
<svg class="ic" style="left:3.5px;top:277px" width="24" height="24" viewBox="0 0 24 24"><defs><linearGradient id="gmt" x1="0" x2="1"><stop offset="0" stop-color="#7090d0"/><stop offset=".4" stop-color="#3058b0"/><stop offset="1" stop-color="#183070"/></linearGradient></defs><rect x="0" y="0" width="24" height="24" fill="#c4c4c4"/><path d="M0 24v-10c1-7 3-12.500 6-12.500s4.500 5 5.500 10v12.500z" fill="url(#gmt)"/><path d="M12.500 24v-12c1-6 3-11 6-11.500 3 1 4.500 6 5.500 12v11.500z" fill="url(#gmt)"/><path d="M14 8c1-4 3-7 5-7.500 1.500.5 3 3 4 6" fill="none" stroke="#ff2020" stroke-width="1.300"/><path d="M15 24c.5-8 1.500-13 3.500-13s3 5 3.500 13z" fill="#ffff00"/><path d="M11.500 11.500l1 12.500" stroke="#d8d8d8" stroke-width="1"/></svg>
<svg class="ic" style="left:3.5px;top:307px" width="24" height="24" viewBox="0 0 24 24"><defs><linearGradient id="gmt" x1="0" x2="1"><stop offset="0" stop-color="#7090d0"/><stop offset=".4" stop-color="#3058b0"/><stop offset="1" stop-color="#183070"/></linearGradient></defs><rect x="0" y="0" width="24" height="24" fill="#c4c4c4"/><path d="M0 24v-10c1-7 3-12.500 6-12.500s4.500 5 5.500 10v12.500z" fill="url(#gmt)"/><path d="M12.500 24v-12c1-6 3-11 6-11.500 3 1 4.500 6 5.500 12v11.500z" fill="url(#gmt)"/><path d="M14 8c1-4 3-7 5-7.500 1.500.5 3 3 4 6" fill="none" stroke="#ff2020" stroke-width="1.300"/><path d="M15 24c.5-8 1.500-13 3.500-13s3 5 3.500 13z" fill="#ffff00"/><path d="M11.500 11.500l1 12.500" stroke="#d8d8d8" stroke-width="1"/></svg>
<svg class="ic" style="left:3.5px;top:339px" width="24" height="24" viewBox="0 0 24 24"><path d="M3.500 7h14v14.500h-14z" fill="#fff" stroke="#000" stroke-width="1.200"/><path d="M4 11h13M4 14h13M4 17h13" stroke="#000" stroke-width=".7"/><path d="M3.500 7l4-5h13.500c1.200 0 1.800.8 1.800 2v4.500c0 1.200-.6 2-1.800 2h-3.500v-3.500z" fill="#fff" stroke="#000" stroke-width="1.200"/><path d="M5.500 6l1.500-1.500 1.500 1.500-1.500 1.500zM8.500 6l1.500-1.500 1.500 1.500-1.500 1.500zM7 4.500l1.500-1.500 1.500 1.500-1.500 1.500zM10 4.500l1.500-1.500 1.500 1.500-1.500 1.500zM7 7.500l1.500-1.500 1.500 1.500-1.500 1.500z" fill="#000"/><path d="M7.500 11v5.500c0 4 7 4 7 0v-5.500" fill="none" stroke="#e81020" stroke-width="2"/></svg>
</div>
<div class="vtb" style="left:358px;top:497px;width:34px;height:197px">
<div class="vgrip" style="top:3px"></div>
<svg class="ic" style="left:3.5px;top:11px" width="24" height="24" viewBox="0 0 24 24"><rect x="1" y="9" width="23" height="14" fill="#f8f8f8"/><path d="M0 2h8M0 4.500h8M0 7h8M0 9.500h5" stroke="#ff2020" stroke-width="1.300"/><rect x="5" y="10" width="3.500" height="11" fill="#ff8c1a" stroke="#000" stroke-width=".9"/><path d="M8.500 16h15.500" stroke="#333" stroke-width="1.500"/><path d="M8.500 20h15.500" stroke="#999" stroke-width="1.300"/><text x="10" y="13.500" font-family="Liberation Sans,sans-serif" font-weight="bold" font-size="17" fill="#000">C</text></svg>
<svg class="ic" style="left:3.5px;top:40px" width="24" height="24" viewBox="0 0 24 24"><rect x="1" y="9" width="23" height="14" fill="#f8f8f8"/><path d="M0 2h8M0 4.500h8M0 7h8M0 9.500h5" stroke="#ff2020" stroke-width="1.300"/><rect x="5" y="10" width="3.500" height="11" fill="#ff8c1a" stroke="#000" stroke-width=".9"/><path d="M8.500 16h15.500" stroke="#333" stroke-width="1.500"/><path d="M8.500 20h15.500" stroke="#999" stroke-width="1.300"/><text x="10" y="13.500" font-family="Liberation Sans,sans-serif" font-weight="bold" font-size="17" fill="#000">Y</text></svg>
<svg class="ic" style="left:3.5px;top:70px" width="24" height="24" viewBox="0 0 24 24"><path d="M11.500 10h12.500" stroke="#333" stroke-width="1.500"/><path d="M11.500 14h12.500" stroke="#999" stroke-width="1.300"/><rect x="8" y="3" width="3.500" height="17" fill="#ff8c1a" stroke="#000" stroke-width=".9"/><path d="M1 11.500h6" stroke="#ff2020" stroke-width="1.600"/><path d="M4.500 7.500l-4 4 4 4" fill="none" stroke="#ff2020" stroke-width="1.600"/><path d="M20 3.500c-4 4-4 12 1 17" fill="none" stroke="#ff2020" stroke-width="1.400"/><path d="M22.500 21.500l-4.500-.5 3-3.500z" fill="#ff2020"/></svg>
<svg class="ic" style="left:3.5px;top:102px" width="24" height="24" viewBox="0 0 24 24"><path d="M1 5.500h10" stroke="#000" stroke-width="1.100"/><path d="M4 2.500l-3 3 3 3M8 2.500l3 3-3 3" fill="none" stroke="#000" stroke-width="1.100"/><text x="13.500" y="12" font-family="Liberation Sans,sans-serif" font-weight="bold" font-size="14" fill="#000">T</text><rect x="1.500" y="12" width="3.500" height="11" fill="#ff8c1a" stroke="#000" stroke-width=".8"/><path d="M5 18.500h19" stroke="#333" stroke-width="1.500"/><path d="M5 22.500h19" stroke="#999" stroke-width="1.300"/></svg>
<svg class="ic" style="left:3.5px;top:131.5px" width="24" height="24" viewBox="0 0 24 24"><text x="13.500" y="12" font-family="Liberation Sans,sans-serif" font-weight="bold" font-size="14" fill="#000">T</text><path d="M5 14h19" stroke="#333" stroke-width="1.500"/><path d="M5 18h19" stroke="#999" stroke-width="1.300"/><rect x="1.500" y="7" width="3.500" height="16.500" fill="#ff8c1a" stroke="#000" stroke-width=".8"/><path d="M13.500 7.500c-4 5-3 12 1.500 15.500" fill="none" stroke="#000" stroke-width="1.400"/><path d="M16.500 24l-5-.5 3.500-3.500z" fill="#000"/></svg>
<svg class="ic" style="left:3.5px;top:165px" width="24" height="24" viewBox="0 0 24 24"><path d="M1 5.500h12v17.500h-12z" fill="#fff" stroke="#707070" stroke-width="1.200"/><path d="M1.500 22.500h11.500v-3" fill="none" stroke="#555" stroke-width="1.200"/><path d="M5.500 13h6M5.500 15.500h6M5.500 18h6" stroke="#707070" stroke-width="1"/><text x="7.500" y="19.500" font-family="Liberation Sans,sans-serif" font-weight="bold" font-size="27" fill="#ffff00" stroke="#000" stroke-width="2.400" stroke-linejoin="round" paint-order="stroke">?</text></svg>
</div>
<div class="vtb" style="left:393px;top:125px;width:34px;height:104px">
<div class="vgrip" style="top:3px"></div>
<svg class="ic" style="left:3.5px;top:11px" width="24" height="24" viewBox="0 0 24 24"><rect x="0" y="0" width="24" height="24" fill="#fadc5a"/><path d="M10 2h4v6l5-4.500 2 2.500-7 6.500v10h-4z" fill="#000"/></svg>
<svg class="ic" style="left:3.5px;top:40px" width="24" height="24" viewBox="0 0 24 24"><rect x="0" y="0" width="24" height="24" fill="#fadc5a"/><path d="M12 1.500l5.500 7h-3.700v5.500l3.700 4-1.500 1.500-2.200-2.500v5.500h-3.600v-14h-3.700z" fill="#000"/></svg>
<svg class="ic" style="left:3.5px;top:73px" width="24" height="24" viewBox="0 0 24 24"><path d="M1 5.500h12v17.500h-12z" fill="#fff" stroke="#707070" stroke-width="1.200"/><path d="M1.500 22.500h11.500v-3" fill="none" stroke="#555" stroke-width="1.200"/><path d="M5.500 13h6M5.500 15.500h6M5.500 18h6" stroke="#707070" stroke-width="1"/><text x="7.500" y="19.500" font-family="Liberation Sans,sans-serif" font-weight="bold" font-size="27" fill="#ffff00" stroke="#000" stroke-width="2.400" stroke-linejoin="round" paint-order="stroke">?</text></svg>
</div>
<div class="vtb" style="left:393px;top:230px;width:34px;height:247px">
<div class="vgrip" style="top:3px"></div>
<svg class="ic" style="left:3.5px;top:11.5px" width="24" height="24" viewBox="0 0 24 24"><path d="M2.500 6c6 2 12 0 17.500-5 0 6 0 10 2 15.500-6 1-12 3-17.500 5.500 0-5-1-11-2-16z" fill="#fff"/><path d="M2.500 6c6 2 12 0 17.500-5M4.500 22c5.500-2.500 11.500-4.500 17.500-5.500" fill="none" stroke="#ff2020" stroke-width="1.300"/><path d="M2.500 6c1 5 2 11 2 16M20 1c0 6 0 10 2 15.500" fill="none" stroke="#20b020" stroke-width="1.200"/><path d="M3.200 11c6 1.500 12 0 17-3.500M3.800 16c6 0 12-2 17.500-4.500M8.500 7c1 5 1.500 9 1.500 13M14.500 5c.5 5 1 9 2 13" fill="none" stroke="#2050c0" stroke-width="1"/><circle cx="2.500" cy="6" r="1.800" fill="#101030"/><circle cx="20" cy="1.800" r="1.800" fill="#101030"/><circle cx="4.500" cy="22" r="1.800" fill="#101030"/><circle cx="22" cy="16.500" r="1.800" fill="#101030"/></svg>
<svg class="ic" style="left:3.5px;top:40.5px" width="24" height="24" viewBox="0 0 24 24"><path d="M2 22l17-20c2 6 3 13 3.500 20z" fill="#fff"/><path d="M2 22l17-20M2 22h20.500" fill="none" stroke="#ff2020" stroke-width="1.300"/><path d="M19 2c2 6 3 13 3.500 20" fill="none" stroke="#20b020" stroke-width="1.200"/><path d="M2 22c7-3 13-8 18.500-15M2 22c8-1 14-5 20-10M13 9c1.500 4 2 8 2 13M17 5c1 5 2 11 2 17" fill="none" stroke="#2050c0" stroke-width="1"/><circle cx="2" cy="22" r="1.800" fill="#101030"/><circle cx="19" cy="2" r="1.800" fill="#101030"/><circle cx="22.500" cy="22" r="1.800" fill="#101030"/></svg>
<svg class="ic" style="left:3.5px;top:70px" width="24" height="24" viewBox="0 0 24 24"><ellipse cx="12" cy="12" rx="10.500" ry="12" transform="rotate(-35 12 12)" fill="#f8f8f8" stroke="#ff2020" stroke-width="1.300"/><ellipse cx="12" cy="12" rx="5" ry="6" transform="rotate(-35 12 12)" fill="none" stroke="#ff2020" stroke-width="1.300"/><path d="M3 5l4.500 3.500M15 8.500l3.500-4.500M7 19l2-3.500M16.500 15l5 3" stroke="#2060c0" stroke-width="1"/><circle cx="14.500" cy="8.500" r="2" fill="#101030"/><circle cx="17.500" cy="3.500" r="1.600" fill="#101030"/></svg>
<svg class="ic" style="left:3.5px;top:99px" width="24" height="24" viewBox="0 0 24 24"><ellipse cx="12" cy="12" rx="10" ry="12.500" transform="rotate(-35 12 12)" fill="#f8f8f8" stroke="#ff2020" stroke-width="1.400"/><circle cx="12" cy="12" r="5.800" fill="none" stroke="#2060c0" stroke-width="1"/><path d="M2.500 6l19.500 13M17 3l-10 18" stroke="#2060c0" stroke-width="1"/><circle cx="16.500" cy="3.500" r="1.800" fill="#101030"/></svg>
<svg class="ic" style="left:3.5px;top:128px" width="24" height="24" viewBox="0 0 24 24"><path d="M2 2c3-1 5 1 8 0s4-1 5.500 0l2 9-12 4z" fill="#1878c8"/><path d="M4.500 8c3-1.500 6 0 9-1.500l5-1 1 9-13 5z" fill="#f09090" stroke="#40a060" stroke-width=".6"/><path d="M8 11c3-1 6 .5 9-.5l5.500-.5 1 9.500c-3 1-6-.5-9 .5s-4 1.500-6 .5z" fill="#2080d0"/><path d="M9 13.500l13 1M9.500 17l13-1" stroke="#50a0e8" stroke-width=".8" stroke-dasharray="1 1"/></svg>
<svg class="ic" style="left:3.5px;top:157px" width="24" height="24" viewBox="0 0 24 24"><defs><linearGradient id="gcy" x1="0" x2="1"><stop offset="0" stop-color="#905800"/><stop offset=".4" stop-color="#f0a810"/><stop offset="1" stop-color="#704000"/></linearGradient></defs><path d="M3.500 5v14.500c0 4.500 17 4.500 17 0v-14.500z" fill="url(#gcy)" stroke="#3a2800" stroke-width=".9"/><ellipse cx="12" cy="5" rx="8.500" ry="3.800" fill="#e09010" stroke="#3a2800" stroke-width=".9"/><path d="M5 8l3 1v3l-3-1zM15 9l4-1v4l-4 1zM9 18l2 .5v2l-2-.5z" fill="#406878"/><path d="M8 4l3-1 2 1.500 3-1" stroke="#406878" stroke-width="1.200" fill="none"/></svg>
<svg class="ic" style="left:3.5px;top:187px" width="24" height="24" viewBox="0 0 24 24"><path d="M1 2l10-1 7 6v14h-8l-9-8z" fill="#d8e4ec" stroke="#222" stroke-width=".9"/><path d="M1 2l9 9v10M10 11l8-4" fill="none" stroke="#222" stroke-width=".8"/><path d="M5 4l8-1c2 5 3 9 6 13l-8 2c-3-4-4-9-6-14z" fill="#f03040"/><path d="M8 5c2 5 3 8 6 12" stroke="#f8a0a0" stroke-width="2" fill="none"/><path d="M13.500 3.500l5-.5c1 5 2.500 10 5.500 13.500l-5 .5c-3-4-4.500-8-5.500-13.500z" fill="#f0e060" stroke="#555" stroke-width=".7"/></svg>
<svg class="ic" style="left:3.5px;top:216px" width="24" height="24" viewBox="0 0 24 24"><path d="M1 4.500l9-3.500h3.500v5l-9 4.500-3.500-1z" fill="#d8e8f0" stroke="#222" stroke-width=".8"/><path d="M1 4.500v5l3.500 1 1-5z" fill="#a8c0d0"/><path d="M10 13l10-2.500 3.500 1v6.500l-4 3h-9.500z" fill="#d8e8f0" stroke="#222" stroke-width=".8"/><path d="M19.500 21l4-3v-6.500l-4 2.500z" fill="#98b0c0"/><path d="M4.500 10.500l9-4.500 6.500 6-9 5.500z" fill="#108898" stroke="#102030" stroke-width=".9"/><path d="M7.500 11l5.500-3 4 4-5.500 3.500z" fill="#f0e060"/></svg>
</div>
<div class="vtb" style="left:393px;top:478px;width:34px;height:102px">
<div class="vgrip" style="top:3px"></div>
<svg class="ic" style="left:3.5px;top:12px" width="24" height="24" viewBox="0 0 24 24"><path d="M1.500 6.500l9-6v17.500l-9 6z" fill="#00f0f0" stroke="#000" stroke-width="1.100"/><path d="M5 10h17" stroke="#000090" stroke-width="1.200"/><path d="M19 7l4.500 3-4.500 3" fill="none" stroke="#000090" stroke-width="1.200"/><path d="M16.500 10l3.500 2.300" stroke="#000090" stroke-width="1"/><text x="13.500" y="24.500" font-family="Liberation Sans,sans-serif" font-size="13" fill="#000" stroke="#000" stroke-width=".4">X</text></svg>
<svg class="ic" style="left:3.5px;top:41px" width="24" height="24" viewBox="0 0 24 24"><rect x="5.500" y="1" width="17.500" height="11.500" fill="#00f0f0" stroke="#000" stroke-width="1.100"/><path d="M15 6l-13 13" stroke="#000090" stroke-width="1.200"/><path d="M1 20.500l1-5.500M1 20.500l5.500-1" stroke="#000090" stroke-width="1.200" fill="none"/><text x="11.500" y="24.500" font-family="Liberation Sans,sans-serif" font-size="13" fill="#000" stroke="#000" stroke-width=".4">Y</text></svg>
<svg class="ic" style="left:3.5px;top:70.5px" width="24" height="24" viewBox="0 0 24 24"><text x="0" y="11.500" font-family="Liberation Sans,sans-serif" font-size="15" fill="#000" stroke="#000" stroke-width=".5">Z</text><path d="M1 23.500l7.500-8.500h15l-7.500 8.500z" fill="#00f0f0" stroke="#000" stroke-width="1.100"/><path d="M13.500 19.500v-17" stroke="#000090" stroke-width="1.300"/><path d="M10 7l3.500-6 3.500 6" fill="none" stroke="#000090" stroke-width="1.300"/></svg>
</div>
<div class="vtb" style="left:428px;top:136px;width:35px;height:454px">
<div class="vgrip" style="top:3px"></div>
<svg class="ic" style="left:4px;top:10.5px" width="24" height="24" viewBox="0 0 24 24"><path d="M.5 4.500h12M19 11.500v10.500" stroke="#0000ff" stroke-width="1.600"/><path d="M12.500 3l3 3M15.500 3l-3 3M17.500 8.500l3 3M20.500 8.500l-3 3" stroke="#ff0000" stroke-width="1.100"/></svg>
<svg class="ic" style="left:4px;top:38.5px" width="24" height="24" viewBox="0 0 24 24"><path d="M3 8l10 10M13 1.500l9 9" stroke="#e0e0e0" stroke-width=".8"/><g transform="translate(2 1.5) scale(1)"><path d="M0 3.500l5.500-3.500h5.500l-5 3.500z" fill="#00d000"/><path d="M0 3.500h6v6.500h-6z" fill="#ff0000"/><path d="M6 3.500l5-3.500v6l-5 4z" fill="#0000f0"/></g><g transform="translate(11.5 11.5) scale(1)"><path d="M0 3.500l5.500-3.500h5.500l-5 3.500z" fill="#00d000"/><path d="M0 3.500h6v6.500h-6z" fill="#ff0000"/><path d="M6 3.500l5-3.500v6l-5 4z" fill="#0000f0"/></g></svg>
<svg class="ic" style="left:4px;top:68px" width="24" height="24" viewBox="0 0 24 24"><path d="M12 0v24" stroke="#000" stroke-width="1.100" stroke-dasharray="1.200 1.500"/><path d="M1 9l5.500-3.500h5v8l-4.500 3.500h-6z" fill="none"/><path d="M1 8.500l5.500-3.500h5l-4.500 3.500z" fill="#00d000"/><path d="M1 8.500h6v7.500h-6z" fill="#ff0000"/><path d="M7 8.500l4.500-3.500v7.500l-4.500 3.500z" fill="#0000f0"/><path d="M23 8.500l-5.500-3.500h-5l4.500 3.500z" fill="#00d000"/><path d="M23 8.500h-6v7.500h6z" fill="#ff0000"/><path d="M17 8.500l-4.500-3.500v7.500l4.500 3.500z" fill="#0000f0"/></svg>
<svg class="ic" style="left:4px;top:98px" width="24" height="24" viewBox="0 0 24 24"><path d="M1.500 7v9c0 3.500 11.500 3.500 11.500 0v-9z" fill="#484848" stroke="#111" stroke-width=".8"/><ellipse cx="7.200" cy="7" rx="5.800" ry="2.800" fill="#6a6a6a" stroke="#111" stroke-width=".8"/><path d="M5 10v8M9.500 10v8" stroke="#2a2a2a" stroke-width="1"/><ellipse cx="19" cy="7.500" rx="4.200" ry="2" fill="none" stroke="#2030ff" stroke-width="1"/><path d="M19 7.500v-4" stroke="#2030ff" stroke-width="1.200"/><path d="M19 0l2.500 3.500h-5z" fill="#2030ff"/><ellipse cx="19" cy="17.500" rx="4.200" ry="2" fill="none" stroke="#2030ff" stroke-width="1"/><path d="M19 17v4" stroke="#2030ff" stroke-width="1.200"/><path d="M19 24l2.500-3.500h-5z" fill="#2030ff"/><circle cx="19" cy="17" r="1" fill="#2030ff"/></svg>
<svg class="ic" style="left:4px;top:126px" width="24" height="24" viewBox="0 0 24 24"><path d="M.5 10l3.500-1.500 3 2.500h10v7l-11 .5-5.500 5z" fill="#ffff80" stroke="#8a8a30" stroke-width=".6"/><path d="M.5 23.500h15.500l7.500-7h-16.500z" fill="#808000" stroke="#000" stroke-width=".9"/><g transform="translate(11 1) scale(1.15)"><path d="M0 3.500l5.500-3.500h5.500l-5 3.500z" fill="#00d000"/><path d="M0 3.500h6v6.500h-6z" fill="#ff0000"/><path d="M6 3.500l5-3.500v6l-5 4z" fill="#0000f0"/></g><path d="M5.500 0v6" stroke="#20b040" stroke-width="1.400"/><path d="M2.500 4l3 3.500 3-3.500" fill="none" stroke="#20b040" stroke-width="1.400"/></svg>
<svg class="ic" style="left:4px;top:155.5px" width="24" height="24" viewBox="0 0 24 24"><path d="M.5 10l3.500-1.500 3 2.500h10v7l-11 .5-5.500 5z" fill="#ffff80" stroke="#8a8a30" stroke-width=".6"/><path d="M.5 23.500h15.500l7.500-7h-16.500z" fill="#808000" stroke="#000" stroke-width=".9"/><g transform="translate(11 1) scale(1.15)"><path d="M0 3.500l5.500-3.500h5.500l-5 3.500z" fill="#00d000"/><path d="M0 3.500h6v6.500h-6z" fill="#ff0000"/><path d="M6 3.500l5-3.500v6l-5 4z" fill="#0000f0"/></g><path d="M5.500 8v-6.500" stroke="#ff0000" stroke-width="1.400"/><path d="M2.500 4l3-3.500 3 3.500" fill="none" stroke="#ff0000" stroke-width="1.400"/></svg>
<svg class="ic" style="left:4px;top:183.5px" width="24" height="24" viewBox="0 0 24 24"><path d="M1 17.500v-9l1.500-2" fill="none" stroke="#ff00ff" stroke-width="1.400"/><path d="M2.500 6.500l3-1 1.500-2 3-.5 3-3" fill="none" stroke="#10a040" stroke-width="1.500"/><path d="M13 1h5" stroke="#ff00ff" stroke-width="1.500"/><path d="M22.500 1l-4.500-2.200v4.400z" fill="#000"/><path d="M7.500 19.500l3-1.500 1.500-2.500 3-.5 4.500-3" fill="none" stroke="#ff00ff" stroke-width="1.500"/><path d="M24 11.500l-5-1.500 1.500 4.500z" fill="#000"/><circle cx="1.200" cy="18" r="1.300" fill="#000"/><circle cx="7.500" cy="19.500" r="1.300" fill="#000"/><path d="M10 6l4.500 4.500" stroke="#ff2020" stroke-width="1.600"/><path d="M15.500 6v5.500h-5.500" fill="none" stroke="#ff2020" stroke-width="1.600"/></svg>
<svg class="ic" style="left:4px;top:214px" width="24" height="24" viewBox="0 0 24 24"><path d="M.5 7.500l11-7c2 2 4 1.500 5 3.500 1.500 3 .5 7 3 8.500l4-2.500-1 3-10 7c-3 1-5-1-5.500-4s0-7-3-8z" fill="#2898c0" stroke="#103048" stroke-width=".9"/><path d="M6 6c3 3 2 8 4 11l10-6.500c-2.500-1.500-1.500-5.500-3-8.500z" fill="#88b8e0" opacity=".7"/><ellipse cx="12.500" cy="6" rx="2.400" ry="2" fill="#ff5060" stroke="#802030" stroke-width=".6"/><ellipse cx="12.500" cy="15.500" rx="2.600" ry="2.200" fill="#ff5060" stroke="#802030" stroke-width=".6"/></svg>
<svg class="ic" style="left:4px;top:244px" width="24" height="24" viewBox="0 0 24 24"><path d="M3 6l5-5h13v15l-5 6h-13z" fill="#fff" stroke="#222" stroke-width=".9"/><path d="M3 6h13v16M16 6l5-5M8 1v15l-5 6M8 16h13" fill="none" stroke="#222" stroke-width=".8"/><path d="M9 4.500h8l3 3v7l-3 3h-6l-2-3z" fill="#c0c0c0" opacity=".8" stroke="#333" stroke-width=".6"/><path d="M3 11c2-3 16-5 20-3-3 3-16 5-20 3zM3 17c2-3 16-5 20-3-3 3-16 5-20 3z" fill="none" stroke="#ff2020" stroke-width="1.100"/></svg>
<svg class="ic" style="left:4px;top:273px" width="24" height="24" viewBox="0 0 24 24"><g transform="translate(0 2.500) rotate(27 10 13)"><rect x="3" y="7.500" width="13" height="11" fill="#0000c8"/><ellipse cx="16" cy="13" rx="2.800" ry="5.500" fill="#000088"/><ellipse cx="3" cy="13" rx="2.800" ry="5.500" fill="#1010ff"/><rect x="3" y="13" width="13" height="5.500" fill="#0000a0" opacity=".6"/></g><path d="M5 2h4l3.500 3.500 4 .5 4.500 4v9.500" fill="none" stroke="#ff00ff" stroke-width="1.400"/><path d="M1 2l4.500-2.300v4.600z" fill="#000"/><circle cx="21" cy="19.500" r="1.400" fill="#000"/><path d="M16 0l5 5M19 0l4 4.500M21.500 0l-4 5" stroke="#e8d800" stroke-width="1.200"/></svg>
<svg class="ic" style="left:4px;top:302px" width="24" height="24" viewBox="0 0 24 24"><path d="M9 2.500c-3-2-7 0-7 3.500s3 4.500 5 4.500h7" fill="none" stroke="#ff00ff" stroke-width="1.500"/><path d="M13.500 6.500c4-1 6.500 2 6 8" fill="none" stroke="#000" stroke-width="1.500"/><path d="M16 12l3.500 4.500 3.500-4.500" fill="none" stroke="#000" stroke-width="1.500"/><path d="M1.500 19.500h21" stroke="#ff00ff" stroke-width="1.600"/></svg>
<svg class="ic" style="left:4px;top:332px" width="24" height="24" viewBox="0 0 24 24"><path d="M1.500 2.500h21" stroke="#ff00ff" stroke-width="1.600"/><path d="M2.500 6v6.500c0 3 3 3.500 9 3.500" fill="none" stroke="#000" stroke-width="1.500"/><path d="M9 12.500l4.500 3.500-4.500 3.500" fill="none" stroke="#000" stroke-width="1.500"/><path d="M15 12c3-1.500 7.500 0 7.500 4s-4 6-7.500 4" fill="none" stroke="#ff00ff" stroke-width="1.500"/></svg>
<svg class="ic" style="left:4px;top:361px" width="24" height="24" viewBox="0 0 24 24"><path d="M1.500 8l6.500-7 11 9-5 9z" fill="#5a5a5a" stroke="#111" stroke-width=".8"/><ellipse cx="5" cy="4.500" rx="4.500" ry="3.200" transform="rotate(35 5 4.500)" fill="#7a7a7a" stroke="#111" stroke-width=".7"/><path d="M8 12l4-6M11 15l4.500-6.500" stroke="#333" stroke-width="1"/><ellipse cx="16" cy="14.500" rx="4" ry="2.800" transform="rotate(35 16 14.500)" fill="#909090"/><path d="M14.500 14l6 6" stroke="#ff2020" stroke-width="2.600"/><path d="M24 24l-8.500-1.500 7-7z" fill="#ff2020"/></svg>
<svg class="ic" style="left:4px;top:393px" width="24" height="24" viewBox="0 0 24 24"><g transform="translate(0 2.500) rotate(27 10 13)"><rect x="3" y="7.500" width="13" height="11" fill="#0000c8"/><ellipse cx="16" cy="13" rx="2.800" ry="5.500" fill="#000088"/><ellipse cx="3" cy="13" rx="2.800" ry="5.500" fill="#1010ff"/><rect x="3" y="13" width="13" height="5.500" fill="#0000a0" opacity=".6"/></g><path d="M5 2h4l3.500 3.500 4 .5 4.500 4v9.500" fill="none" stroke="#ff00ff" stroke-width="1.400"/><path d="M1 2l4.500-2.300v4.600z" fill="#000"/><circle cx="21" cy="19.500" r="1.400" fill="#000"/><text x="17" y="7" font-family="Liberation Sans,sans-serif" font-size="9" font-weight="bold" fill="#50c070">U</text></svg>
<svg class="ic" style="left:4px;top:423px" width="24" height="24" viewBox="0 0 24 24"><path d="M5 2.500h4l3.500 3.500 4 .5 4.500 4v9" fill="none" stroke="#ff00ff" stroke-width="1.400"/><path d="M1 2.500l4.500-2.300v4.600z" fill="#000"/><path d="M5 12.500l2.500 1 2 2.500 3 .5 4 3.500" fill="none" stroke="#ff00ff" stroke-width="1.500"/><path d="M1 12l5-1-1.500 4z" fill="#000"/><circle cx="21" cy="19.500" r="1.400" fill="#000"/><circle cx="16.500" cy="20.500" r="1.400" fill="#000"/><text x="17" y="7" font-family="Liberation Sans,sans-serif" font-size="9" font-weight="bold" fill="#50c070">U</text></svg>
</div>
<div class="vtb" style="left:464px;top:125px;width:34px;height:159px">
<div class="vgrip" style="top:3px"></div>
<svg class="ic" style="left:3.5px;top:11.5px" width="24" height="24" viewBox="0 0 24 24"><rect x="1.500" y="2.5" width="3" height="3" fill="#fff" stroke="#000090" stroke-width="1.200"/><path d="M7 4h4" stroke="#000090" stroke-width="1.300"/><rect x="13.500" y="2.5" width="3" height="3" fill="#fff" stroke="#000090" stroke-width="1.200"/><path d="M19 4h4" stroke="#000090" stroke-width="1.300"/><rect x="1.500" y="10" width="3" height="3" fill="#fff" stroke="#000090" stroke-width="1.200"/><path d="M7 11.5h4" stroke="#000090" stroke-width="1.300"/><rect x="13.500" y="10" width="3" height="3" fill="#fff" stroke="#000090" stroke-width="1.200"/><path d="M19 11.5h4" stroke="#000090" stroke-width="1.300"/><rect x="1.500" y="17.5" width="3" height="3" fill="#fff" stroke="#000090" stroke-width="1.200"/><path d="M7 19h4" stroke="#000090" stroke-width="1.300"/><rect x="13.500" y="17.5" width="3" height="3" fill="#fff" stroke="#000090" stroke-width="1.200"/><path d="M19 19h4" stroke="#000090" stroke-width="1.300"/></svg>
<svg class="ic" style="left:3.5px;top:39px" width="24" height="24" viewBox="0 0 24 24"><path d="M1.500 4.500h21M4.500 7.500h15M1.500 10.500h21M4.500 13.500h15M1.500 16.500h21M4.500 19.500h15" stroke="#000" stroke-width="1.500"/></svg>
<div class="abs" style="left:3px;top:69px;width:26px;height:24px;background:#d4d4d4"></div>
<svg class="ic" style="left:3.5px;top:69px" width="24" height="24" viewBox="0 0 24 24"><path d="M3 8c0-4 2-6 4.500-6M21 8c0-3-1-5-3-5.500" fill="none" stroke="#000" stroke-width="1.500"/><ellipse cx="6" cy="15" rx="5" ry="6" fill="#b8dcf0" stroke="#000" stroke-width="1.800"/><ellipse cx="17.500" cy="16" rx="5" ry="6" fill="#b8dcf0" stroke="#000" stroke-width="1.800"/><path d="M10.500 13c1.500-1.500 2.500-1 3.500 0" fill="none" stroke="#000" stroke-width="2"/><path d="M4 13l2-2M15.500 14l2-2" stroke="#fff" stroke-width="1.300"/></svg>
<svg class="ic" style="left:3.5px;top:98px" width="24" height="24" viewBox="0 0 24 24"><g transform="translate(6.5 0)"><path d="M5 6.500v-6.500" stroke="#000090" stroke-width=".9"/><path d="M5 6.500l-4.500-3.500" stroke="#10a040" stroke-width=".9"/><path d="M5 6.500l4.500-3" stroke="#ff2020" stroke-width=".9"/><path d="M5 0l1 1.500h-2z" fill="#000090"/><circle cx=".8" cy="3.200" r=".7" fill="#10a040"/><circle cx="9.300" cy="3.700" r=".7" fill="#ff2020"/></g><g transform="translate(2.5 12)"><path d="M5 6.500v-6.500" stroke="#000090" stroke-width=".9"/><path d="M5 6.500l-4.500-3.500" stroke="#10a040" stroke-width=".9"/><path d="M5 6.500l4.500-3" stroke="#ff2020" stroke-width=".9"/><path d="M5 0l1 1.500h-2z" fill="#000090"/><circle cx=".8" cy="3.200" r=".7" fill="#10a040"/><circle cx="9.300" cy="3.700" r=".7" fill="#ff2020"/></g><g transform="translate(13.5 10)"><path d="M5 6.500v-6.500" stroke="#000090" stroke-width=".9"/><path d="M5 6.500l-4.500-3.500" stroke="#10a040" stroke-width=".9"/><path d="M5 6.500l4.500-3" stroke="#ff2020" stroke-width=".9"/><path d="M5 0l1 1.500h-2z" fill="#000090"/><circle cx=".8" cy="3.200" r=".7" fill="#10a040"/><circle cx="9.300" cy="3.700" r=".7" fill="#ff2020"/></g></svg>
<svg class="ic" style="left:3.5px;top:128.5px" width="24" height="24" viewBox="0 0 24 24"><path d="M3.500 7h14v14.500h-14z" fill="#fff" stroke="#000" stroke-width="1.200"/><path d="M4 11h13M4 14h13M4 17h13" stroke="#000" stroke-width=".7"/><path d="M3.500 7l4-5h13.500c1.200 0 1.800.8 1.800 2v4.500c0 1.200-.6 2-1.800 2h-3.500v-3.500z" fill="#fff" stroke="#000" stroke-width="1.200"/><path d="M5.500 6l1.500-1.500 1.500 1.500-1.500 1.500zM8.500 6l1.500-1.500 1.500 1.500-1.500 1.500zM7 4.500l1.500-1.500 1.500 1.500-1.500 1.500zM10 4.500l1.500-1.500 1.500 1.500-1.500 1.500zM7 7.500l1.500-1.500 1.500 1.500-1.500 1.500z" fill="#000"/><text x="5" y="20" font-family="Liberation Sans,sans-serif" font-size="11.500" fill="#f02020" stroke="#f02020" stroke-width=".3">M</text></svg>
</div>
<div class="abs" id="viewport" style="left:502px;top:125px;width:1115px;height:1036px;background:#fff;overflow:hidden">
<svg width="1115" height="1036" viewBox="0 0 1115 1036" style="position:absolute;left:0;top:0">
<defs>
<linearGradient id="gRim" gradientUnits="userSpaceOnUse" x1="320.3" y1="138.5" x2="113.7" y2="572.9"><stop offset="0" stop-color="#c4c6d2"/><stop offset=".25" stop-color="#dcdde8"/><stop offset=".55" stop-color="#f3f3fa"/><stop offset=".8" stop-color="#d0d1dc"/><stop offset="1" stop-color="#a4a6b2"/></linearGradient>
<linearGradient id="gNeck" gradientUnits="userSpaceOnUse" x1="277.2" y1="229.3" x2="156.8" y2="482.1"><stop offset="0" stop-color="#b4b6c2"/><stop offset=".3" stop-color="#dfe0ea"/><stop offset=".6" stop-color="#ecedf5"/><stop offset="1" stop-color="#9d9fab"/></linearGradient>
<linearGradient id="gYel" gradientUnits="userSpaceOnUse" x1="277.2" y1="229.3" x2="156.8" y2="482.1"><stop offset="0" stop-color="#8c8c00"/><stop offset=".025" stop-color="#b4b400"/><stop offset=".07" stop-color="#d4d400"/><stop offset=".17" stop-color="#f0f000"/><stop offset=".3" stop-color="#ffff00"/><stop offset=".76" stop-color="#ffff00"/><stop offset=".88" stop-color="#eaea00"/><stop offset=".96" stop-color="#c0c000"/><stop offset="1" stop-color="#8e8e00"/></linearGradient>
<linearGradient id="gCh" gradientUnits="userSpaceOnUse" x1="277.2" y1="229.3" x2="156.8" y2="482.1"><stop offset="0" stop-color="#a9abb7"/><stop offset=".2" stop-color="#d6d7e2"/><stop offset=".6" stop-color="#f1f1f8"/><stop offset=".85" stop-color="#c3c5d0"/><stop offset="1" stop-color="#8f919c"/></linearGradient>
<linearGradient id="gHole" x1="0" y1="0" x2="1" y2="0"><stop offset="0" stop-color="#4c4d53"/><stop offset=".12" stop-color="#55565c"/><stop offset=".3" stop-color="#7a7b84"/><stop offset=".55" stop-color="#9c9ea7"/><stop offset=".8" stop-color="#abadb7"/><stop offset="1" stop-color="#adafb9"/></linearGradient>
<linearGradient id="gFil" gradientUnits="userSpaceOnUse" x1="277.2" y1="229.3" x2="156.8" y2="482.1"><stop offset="0" stop-color="#9d9faa"/><stop offset=".5" stop-color="#e6e7ef"/><stop offset="1" stop-color="#8f919b"/></linearGradient>
</defs>
<path d="M 292.36 125.22 A 69.74 240.50 25.45 0 0 85.66 559.54 L 113.65 572.86 A 69.74 240.50 25.45 0 0 320.35 138.54 Z" fill="url(#gRim)" stroke="#2a2a2e" stroke-width="0.9"/>
<path d="M 295.03 127.04 A 69.60 240.00 25.45 0 0 88.76 560.46" fill="none" stroke="#2a2a2e" stroke-width="0.8"/>
<ellipse cx="217.00" cy="355.70" rx="69.74" ry="240.50" transform="rotate(25.45 217.00 355.70)" fill="#d9dae4" stroke="#2a2a2e" stroke-width="0.8"/>
<ellipse cx="218.08" cy="356.22" rx="68.58" ry="236.50" transform="rotate(25.45 218.08 356.22)" fill="#535458" stroke="#2a2a2e" stroke-width="0.9"/>
<clipPath id="cShaft"><path d="M 241.04 212.10 L 1054.61 599.28 L 934.29 852.11 L 120.72 464.93 Z"/></clipPath>
<clipPath id="cFil"><path d="M 242.33 209.39 L 1055.90 596.57 L 933.00 854.82 L 119.43 467.63 Z"/></clipPath>
<path clip-path="url(#cFil)" d="M 285.11 224.21 A 42.92 148.00 25.45 0 0 157.92 491.49 L 167.24 488.17 A 40.89 141.00 25.45 0 0 288.43 233.54 Z" fill="url(#gFil)" stroke="#2a2a2e" stroke-width="0.8"/>
<g clip-path="url(#cShaft)">
<path d="M 288.62 231.97 A 41.32 142.50 25.45 0 0 166.15 489.31 L 188.72 500.06 A 41.32 142.50 25.45 0 0 311.19 242.71 Z" fill="url(#gNeck)" stroke="#2a2a2e" stroke-width="0.8"/>
<path d="M 311.19 242.71 A 41.32 142.50 25.45 0 0 188.72 500.06 L 860.98 819.99 A 41.32 142.50 25.45 0 0 983.45 562.64 Z" fill="url(#gYel)" stroke="#3c3c10" stroke-width="0.6"/>
<path d="M 983.45 562.64 A 41.32 142.50 25.45 0 0 860.98 819.99 L 877.59 823.46 A 40.16 138.50 25.45 0 0 996.63 573.34 Z" fill="url(#gCh)" stroke="#2a2a2e" stroke-width="0.8"/>
</g>
<path d="M 286.19 233.58 L 982.37 564.90 M 165.87 486.41 L 854.83 814.29" stroke="#5a5a20" stroke-width="0.5" fill="none"/>
<ellipse cx="937.11" cy="698.40" rx="40.16" ry="138.50" transform="rotate(25.45 937.11 698.40)" fill="#8f919b" stroke="#2a2a2e" stroke-width="0.7"/>
<ellipse cx="937.83" cy="698.75" rx="39.73" ry="137.00" transform="rotate(25.45 937.83 698.75)" fill="#535458" stroke="#2a2a2e" stroke-width="0.9"/>
<path d="M 731.5 563.0 C 730.0 527.0 756.0 501.5 796.0 501.0 C 843.0 500.5 900.0 523.0 900.0 561.0 C 900.0 597.0 841.0 642.0 799.0 643.0 C 760.0 644.0 733.0 597.0 731.5 563.0 Z" fill="url(#gHole)" stroke="#ffb400" stroke-width="5.6"/>
<path d="M 731.5 563.0 C 730.0 527.0 756.0 501.5 796.0 501.0 C 843.0 500.5 900.0 523.0 900.0 561.0 C 900.0 597.0 841.0 642.0 799.0 643.0 C 760.0 644.0 733.0 597.0 731.5 563.0 Z" fill="none" stroke="#ececf4" stroke-width="1.1"/>
</svg>
</div>
<div class="abs" style="left:1617px;top:125px;width:1px;height:1037px;background:#8c8c8c"></div>
<div class="abs" style="left:502px;top:1161px;width:1116px;height:1px;background:#c0c0c0"></div>
<div class="abs" style="left:1620px;top:125px;width:2px;height:1037px;background:#9a9a9a"></div>
<div class="hgrip" style="left:1625px;top:129px;width:280px"></div>
<div class="xbtn" style="left:1906px;top:127px">×</div>
<div class="abs" style="left:1628px;top:140px;width:284px;height:1018px;background:#fff;border:1px solid #e6e6e6;border-top:2px solid #6e6e6e;border-left:2px solid #6e6e6e"></div>
<div class="abs" style="left:1630px;top:142px;width:281px;height:20px;background:#f0f0f0;border-bottom:2px solid #767676;border-right:1px solid #767676"></div>
<div class="abs" style="left:1768px;top:142px;width:2px;height:19px;background:#767676"></div>
<div class="abs" style="left:1630px;top:162px;width:281px;height:20px;border-bottom:1px solid #d5d5d5"></div>
<div class="abs" style="left:1769px;top:162px;width:1px;height:19px;background:#d5d5d5"></div>
<div class="abs" style="left:1634px;top:143px;line-height:17px">關鍵</div><div class="abs" style="left:1775px;top:143px;line-height:17px">數值</div>
<div class="abs" style="left:1638px;top:171px;width:10px;border-top:1px dotted #aaa"></div>
<div class="abs" style="left:1650px;top:163px;line-height:17px">組數</div><div class="abs" style="left:1773px;top:163px;line-height:17px">1</div>
<div id="status">
<div class="abs" style="left:2px;top:2px;line-height:16px">選擇下一個工作</div>
<div class="abs" style="left:2px;top:21px;line-height:16px">需要說明, 按F1</div>
<div class="sb" style="left:1604px;top:1px;width:49px;color:#000;">2D車床</div>
<div class="sb" style="left:1655px;top:1px;width:45px;color:#000;">副圖素</div>
<div class="sb" style="left:1702px;top:1px;width:31px;color:#000;">捕捉</div>
<div class="sb" style="left:1735px;top:1px;width:31px;color:#a8a8a8;">交點</div>
<div class="sb" style="left:1768px;top:1px;width:31px;color:#a8a8a8;">網格</div>
<div class="sb" style="left:1801px;top:1px;width:119px;color:#000;">HI</div>
<div class="abs" style="left:1822px;top:2px;width:10px;height:15px;background:#000"></div>
<div class="abs" style="left:1837px;top:9px;width:83px;height:1px;background:#000"></div>
<div class="sb" style="left:1627px;top:20px;width:85px;color:#000;">X -35.9447</div>
<div class="sb" style="left:1714px;top:20px;width:85px;color:#000;">Y 11.1297</div>
<div class="sb" style="left:1801px;top:20px;width:85px;color:#000;">Z 0.0000</div>
<div class="sb" style="left:1888px;top:20px;width:32px;color:#000;">公制</div>
</div>
</body></html>
